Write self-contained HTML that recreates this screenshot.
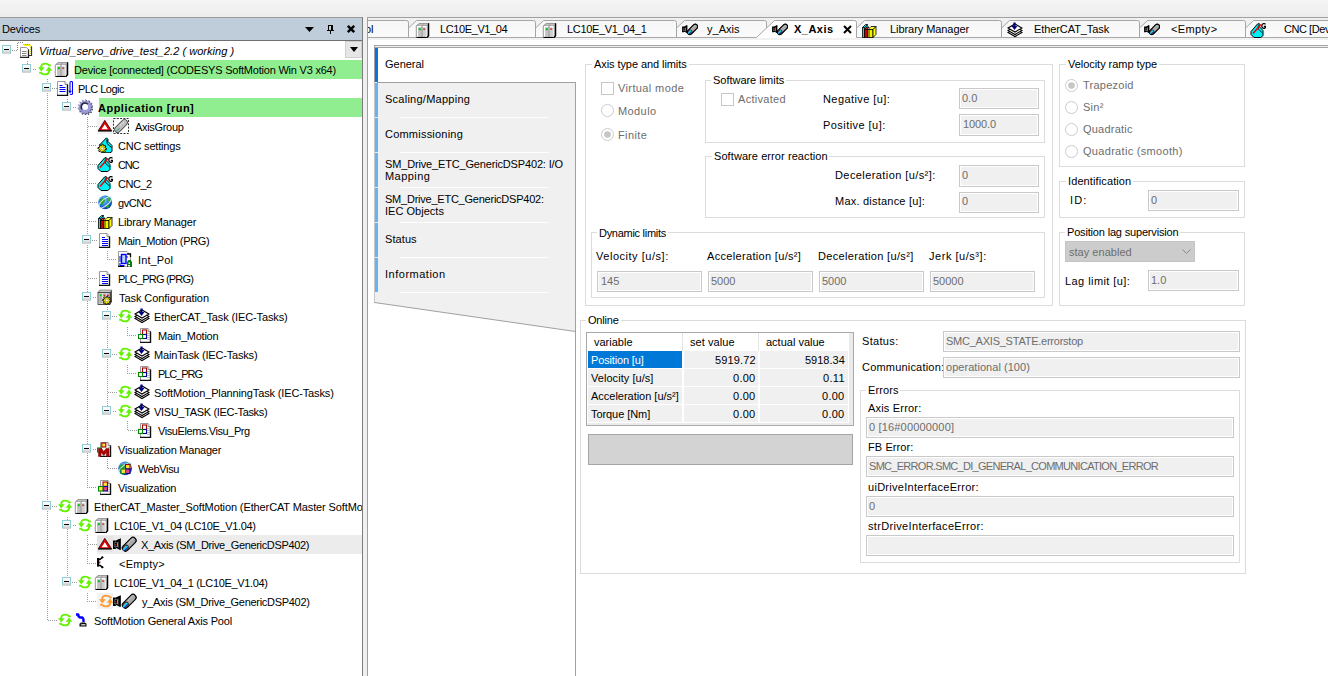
<!DOCTYPE html>
<html><head><meta charset="utf-8"><style>
html,body{margin:0;padding:0;width:1328px;height:676px;overflow:hidden;background:#fff;position:relative}
body div,body svg{position:absolute}
.t{font-family:"Liberation Sans", sans-serif;font-size:11px;line-height:20px;height:20px;white-space:pre}
</style></head><body>
<div style="left:0px;top:0px;width:1328px;height:17px;background:linear-gradient(#f5f5f5,#ececec)"></div>
<div style="left:0px;top:17px;width:363px;height:1px;background:#9a9a9a"></div>
<div style="left:0px;top:18px;width:362px;height:22px;background:#bfcddb"></div>
<div style="left:0px;top:40px;width:363px;height:1px;background:#6f6f6f"></div>
<div style="left:362px;top:17px;width:1px;height:659px;background:#7c7c7c"></div>
<div style="left:0px;top:41px;width:362px;height:635px;background:#fff"></div>
<div class="t" style="left:2px;top:19px;color:#000;letter-spacing:-0.154px;">Devices</div>
<svg style="left:305px;top:27px;" width="10" height="6" viewBox="0 0 10 6"><path d="M0 0H9L4.5 5Z" fill="#000"/></svg>
<svg style="left:326px;top:24px;" width="10" height="11" viewBox="0 0 10 11"><path d="M2 1H7V6H2ZM3 2V6H5V2Z" fill="#000" fill-rule="evenodd"/><path d="M1 6H8V7H1ZM4 7H5V10H4Z" fill="#000"/></svg>
<svg style="left:346px;top:24px;" width="11" height="11" viewBox="0 0 11 11"><path d="M1.8 1.8L8.2 8.2M8.2 1.8L1.8 8.2" stroke="#000" stroke-width="2.5"/></svg>
<div style="left:363px;top:17px;width:4px;height:659px;background:#f0f0f0"></div>
<div style="left:0px;top:41px;width:362px;height:635px;overflow:hidden;">
<div style="left:75px;top:19px;width:287px;height:19px;background:#90ee90"></div>
<div style="left:99px;top:57px;width:263px;height:19px;background:#90ee90"></div>
<div style="left:97px;top:77px;width:16px;height:16px;background:#f3f3f3"></div>
<div style="left:97px;top:494px;width:265px;height:19px;background:#ececec"></div>
<div style="left:97px;top:495px;width:16px;height:16px;background:#e4e4e4"></div>
<div style="left:97px;top:552px;width:16px;height:16px;background:#f3f3f3"></div>
<div style="left:12px;top:9px;width:5px;height:1px;background:repeating-linear-gradient(90deg,#9a9a9a 0 1px,transparent 1px 2px)"></div>
<svg style="left:2px;top:4px;" width="9" height="9" viewBox="0 0 9 9"><defs><linearGradient id="eg" x1="0" y1="0" x2="0" y2="1"><stop offset="0" stop-color="#fff"/><stop offset=".45" stop-color="#f4f4f4"/><stop offset="1" stop-color="#c8c8c8"/></linearGradient></defs><rect x=".5" y=".5" width="8" height="8" fill="url(#eg)" stroke="#92ccd4" stroke-width="1"/><path d="M0 8.5H9" stroke="#d0d6d8"/><path d="M2 4.5H7" stroke="#000" stroke-width="1"/></svg>
<svg style="left:17px;top:1px;" width="16" height="16" viewBox="0 0 16 16"><path d="M0.5 8V0.5H7" stroke="#888" stroke-dasharray="1,1" fill="none"/><path d="M6.5 2.5H12.5L14.5 4.5V13.5H11" fill="#fff" stroke="#888" stroke-width="1"/><path d="M7 3H12.5L14 4.5V13" stroke="#f2f200" stroke-width="2" stroke-dasharray="1,1" fill="none"/><path d="M14.5 4.5V13.5H11" stroke="#333" stroke-width="1.2" fill="none"/><path d="M3.5 5.5H9.5L11.5 7.5V15.5H3.5Z" fill="#fff" stroke="#999" stroke-width="1"/><path d="M11.5 7.5V15.5H3" stroke="#222" stroke-width="1.3" fill="none"/><path d="M5 9.5H9.5M5 11.5H9.5M5 13.5H9.5" stroke="#777" stroke-width=".9"/></svg>
<div class="t" style="left:39px;top:0px;color:#000;font-style:italic;letter-spacing:0.040px;">Virtual_servo_drive_test_2.2 ( working )</div>
<div style="left:27px;top:19px;width:1px;height:10px;background:repeating-linear-gradient(transparent 0 1px,#9a9a9a 1px 2px)"></div>
<div style="left:32px;top:28px;width:5px;height:1px;background:repeating-linear-gradient(90deg,transparent 0 1px,#9a9a9a 1px 2px)"></div>
<svg style="left:22px;top:23px;" width="9" height="9" viewBox="0 0 9 9"><defs><linearGradient id="eg" x1="0" y1="0" x2="0" y2="1"><stop offset="0" stop-color="#fff"/><stop offset=".45" stop-color="#f4f4f4"/><stop offset="1" stop-color="#c8c8c8"/></linearGradient></defs><rect x=".5" y=".5" width="8" height="8" fill="url(#eg)" stroke="#92ccd4" stroke-width="1"/><path d="M0 8.5H9" stroke="#d0d6d8"/><path d="M2 4.5H7" stroke="#000" stroke-width="1"/></svg>
<svg style="left:37px;top:20px;" width="16" height="16" viewBox="0 0 16 16"><g fill="none" stroke="#62f200" stroke-width="1.9"><path d="M4.2 7V5.8Q4.5 2.6 8.2 2.6Q10.8 2.6 12.2 4.4H13.8"/><path d="M2.2 11.8H4Q5.6 13.4 8.2 13.4Q11.8 13.4 12.2 9.8V9"/></g><path d="M1 6.3H7.6L4.3 10.6Z" fill="#62f200"/><path d="M8.7 9.7H15.3L12 5.4Z" fill="#62f200"/></svg>
<svg style="left:54px;top:20px;" width="16" height="16" viewBox="0 0 16 16"><path d="M1.5 4L4 1.5H13.5L11.5 4Z" fill="#c4c4c4" stroke="#8a8a8a" stroke-width=".8"/><path d="M11.5 4L13.5 1.5V13.5L11.5 15.5Z" fill="#a0a0a0"/><path d="M13.6 1.2V13.8L11.8 15.8" stroke="#000" stroke-width="1.3" fill="none"/><rect x="1.5" y="4" width="10" height="11.5" fill="#fff"/><path d="M1.3 4V15.5" stroke="#8a8a8a" stroke-width=".9"/><rect x="3" y="5.2" width="3.6" height="10.3" fill="#c4c4c4"/><rect x="7.4" y="5.2" width="3.4" height="10.3" fill="#cdcdcd"/><path d="M7 4V15.5" stroke="#777" stroke-width=".9"/><path d="M4 1.6L2 4M8.6 1.6L6.8 4" stroke="#888" stroke-width=".6"/><rect x="3.8" y="6.2" width="2" height="2" fill="#00c000"/><rect x="8.2" y="6.6" width="2" height="1" fill="#a00000"/><path d="M1.5 15.6H11.8" stroke="#000" stroke-width="1.3"/></svg>
<div class="t" style="left:74px;top:19px;color:#000;letter-spacing:-0.214px;">Device [connected] (CODESYS SoftMotion Win V3 x64)</div>
<div style="left:47px;top:38px;width:1px;height:10px;background:repeating-linear-gradient(#9a9a9a 0 1px,transparent 1px 2px)"></div>
<div style="left:47px;top:47px;width:1px;height:10px;background:repeating-linear-gradient(transparent 0 1px,#9a9a9a 1px 2px)"></div>
<div style="left:52px;top:47px;width:5px;height:1px;background:repeating-linear-gradient(90deg,#9a9a9a 0 1px,transparent 1px 2px)"></div>
<svg style="left:42px;top:42px;" width="9" height="9" viewBox="0 0 9 9"><defs><linearGradient id="eg" x1="0" y1="0" x2="0" y2="1"><stop offset="0" stop-color="#fff"/><stop offset=".45" stop-color="#f4f4f4"/><stop offset="1" stop-color="#c8c8c8"/></linearGradient></defs><rect x=".5" y=".5" width="8" height="8" fill="url(#eg)" stroke="#92ccd4" stroke-width="1"/><path d="M0 8.5H9" stroke="#d0d6d8"/><path d="M2 4.5H7" stroke="#000" stroke-width="1"/></svg>
<svg style="left:57px;top:39px;" width="16" height="16" viewBox="0 0 16 16"><path d="M0.5 1.5H8 L10.5 4.5V15.5H0.5Z" fill="#fff" stroke="#9a9a9a" stroke-width="1"/><path d="M8 1.5V4.5H10.5" fill="#eee" stroke="#777" stroke-width=".8"/><path d="M10.5 4.5V15.5H0" stroke="#111" stroke-width="1.4" fill="none"/><path d="M2.5 5.5H5.5M2.5 7.5H8.5M2.5 9.5H8.5M2.5 11.5H8.5" stroke="#0000f0" stroke-width="1"/><path d="M13 11.5V2.5Q13 1.5 14 1.5H14.5Q15.5 1.5 15.5 2.5V13.5Q15.5 14.5 14.5 14.5H14Q13.3 14.5 13.3 13.8" stroke="#0000ff" stroke-width="1.1" fill="none"/><path d="M11.2 10.8H14.8L13 13.6Z" fill="#0000ff"/></svg>
<div class="t" style="left:78px;top:38px;color:#000;letter-spacing:-0.546px;">PLC Logic</div>
<div style="left:67px;top:57px;width:1px;height:10px;background:repeating-linear-gradient(transparent 0 1px,#9a9a9a 1px 2px)"></div>
<div style="left:47px;top:57px;width:1px;height:19px;background:repeating-linear-gradient(transparent 0 1px,#9a9a9a 1px 2px)"></div>
<div style="left:72px;top:66px;width:5px;height:1px;background:repeating-linear-gradient(90deg,transparent 0 1px,#9a9a9a 1px 2px)"></div>
<svg style="left:62px;top:61px;" width="9" height="9" viewBox="0 0 9 9"><defs><linearGradient id="eg" x1="0" y1="0" x2="0" y2="1"><stop offset="0" stop-color="#fff"/><stop offset=".45" stop-color="#f4f4f4"/><stop offset="1" stop-color="#c8c8c8"/></linearGradient></defs><rect x=".5" y=".5" width="8" height="8" fill="url(#eg)" stroke="#92ccd4" stroke-width="1"/><path d="M0 8.5H9" stroke="#d0d6d8"/><path d="M2 4.5H7" stroke="#000" stroke-width="1"/></svg>
<svg style="left:77px;top:58px;" width="16" height="16" viewBox="0 0 16 16"><polygon points="8.20,0.30 9.06,0.35 9.54,2.15 10.18,2.34 11.54,1.06 12.30,1.48 11.94,3.31 12.44,3.76 14.22,3.20 14.72,3.90 13.61,5.40 13.86,6.02 15.71,6.29 15.85,7.14 14.20,8.00 14.16,8.67 15.71,9.71 15.47,10.54 13.61,10.60 13.28,11.19 14.22,12.80 13.64,13.44 11.94,12.69 11.39,13.08 11.54,14.94 10.74,15.27 9.54,13.85 8.87,13.96 8.20,15.70 7.34,15.65 6.86,13.85 6.22,13.66 4.86,14.94 4.10,14.52 4.46,12.69 3.96,12.24 2.18,12.80 1.68,12.10 2.79,10.60 2.54,9.98 0.69,9.71 0.55,8.86 2.20,8.00 2.24,7.33 0.69,6.29 0.93,5.46 2.79,5.40 3.12,4.81 2.18,3.20 2.76,2.56 4.46,3.31 5.01,2.92 4.86,1.06 5.66,0.73 6.86,2.15 7.53,2.04" fill="#3a3a4a" transform="translate(.7,.7)"/><polygon points="8.20,0.30 9.06,0.35 9.54,2.15 10.18,2.34 11.54,1.06 12.30,1.48 11.94,3.31 12.44,3.76 14.22,3.20 14.72,3.90 13.61,5.40 13.86,6.02 15.71,6.29 15.85,7.14 14.20,8.00 14.16,8.67 15.71,9.71 15.47,10.54 13.61,10.60 13.28,11.19 14.22,12.80 13.64,13.44 11.94,12.69 11.39,13.08 11.54,14.94 10.74,15.27 9.54,13.85 8.87,13.96 8.20,15.70 7.34,15.65 6.86,13.85 6.22,13.66 4.86,14.94 4.10,14.52 4.46,12.69 3.96,12.24 2.18,12.80 1.68,12.10 2.79,10.60 2.54,9.98 0.69,9.71 0.55,8.86 2.20,8.00 2.24,7.33 0.69,6.29 0.93,5.46 2.79,5.40 3.12,4.81 2.18,3.20 2.76,2.56 4.46,3.31 5.01,2.92 4.86,1.06 5.66,0.73 6.86,2.15 7.53,2.04" fill="#9a9ad8"/><path d="M5.2 10.5A3.4 3.4 0 1 1 10.8 5.2" stroke="#2a2a30" stroke-width="1.6" fill="none"/><circle cx="8.2" cy="8" r="2.9" fill="#fff"/></svg>
<div class="t" style="left:98px;top:57px;color:#000;font-weight:bold;letter-spacing:0.487px;">Application [run]</div>
<div style="left:87px;top:76px;width:1px;height:10px;background:repeating-linear-gradient(#9a9a9a 0 1px,transparent 1px 2px)"></div>
<div style="left:87px;top:85px;width:1px;height:10px;background:repeating-linear-gradient(transparent 0 1px,#9a9a9a 1px 2px)"></div>
<div style="left:47px;top:76px;width:1px;height:19px;background:repeating-linear-gradient(#9a9a9a 0 1px,transparent 1px 2px)"></div>
<div style="left:88px;top:85px;width:9px;height:1px;background:repeating-linear-gradient(90deg,#9a9a9a 0 1px,transparent 1px 2px)"></div>
<svg style="left:98px;top:77px;" width="16" height="16" viewBox="0 0 16 16"><path d="M6.8 2.3L13.6 12.8H0.2Z" fill="#e00000" stroke="#000" stroke-width=".7" stroke-linejoin="round"/><path d="M6.8 6.3L10 11.2H3.6Z" fill="#fff"/><path d="M0 12.9H13.8" stroke="#000" stroke-width="1.1"/></svg>
<svg style="left:113px;top:77px;" width="16" height="16" viewBox="0 0 16 16"><rect x="0.5" y="0.5" width="15" height="15" fill="none" stroke="#333" stroke-width="1" stroke-dasharray="2,1.3"/><path d="M4.5 11.5L11.5 4.5" stroke="#555" stroke-width="6.8" stroke-linecap="round"/><path d="M4.5 11.5L11.5 4.5" stroke="#c0c0c0" stroke-width="5" stroke-linecap="round"/><path d="M7 7L11.5 3" stroke="#e8e8e8" stroke-width="1.2" stroke-dasharray="1,1"/><path d="M2.8 13.2L6.3 9.7" stroke="#70d070" stroke-width="1.3"/><path d="M3.4 13.8L6.8 10.4" stroke="#5050ff" stroke-width=".8"/></svg>
<div class="t" style="left:135px;top:76px;color:#000;letter-spacing:-0.320px;">AxisGroup</div>
<div style="left:87px;top:95px;width:1px;height:10px;background:repeating-linear-gradient(transparent 0 1px,#9a9a9a 1px 2px)"></div>
<div style="left:87px;top:104px;width:1px;height:10px;background:repeating-linear-gradient(#9a9a9a 0 1px,transparent 1px 2px)"></div>
<div style="left:47px;top:95px;width:1px;height:19px;background:repeating-linear-gradient(transparent 0 1px,#9a9a9a 1px 2px)"></div>
<div style="left:88px;top:104px;width:9px;height:1px;background:repeating-linear-gradient(90deg,transparent 0 1px,#9a9a9a 1px 2px)"></div>
<svg style="left:97px;top:96px;" width="16" height="16" viewBox="0 0 16 16"><path d="M2.5 8L9.5 0.8L11 2.5V4.5L15 8.5V14.5L13 15.8H6Z" fill="#00f0f8" stroke="#000" stroke-width="1"/><path d="M10 2.2V6.5L14.5 10.5" stroke="#000" stroke-width="1" fill="none"/><polygon points="9.60,11.50 9.52,12.36 7.97,12.65 7.69,13.17 8.31,14.61 7.64,15.16 6.35,14.27 5.79,14.44 5.20,15.90 4.34,15.82 4.05,14.27 3.53,13.99 2.09,14.61 1.54,13.94 2.43,12.65 2.26,12.09 0.80,11.50 0.88,10.64 2.43,10.35 2.71,9.83 2.09,8.39 2.76,7.84 4.05,8.73 4.61,8.56 5.20,7.10 6.06,7.18 6.35,8.73 6.87,9.01 8.31,8.39 8.86,9.06 7.97,10.35 8.14,10.91" fill="#ffee00" stroke="#000" stroke-width=".9"/><circle cx="5.2" cy="11.5" r="1.4" fill="#fff" stroke="#555" stroke-width=".5"/></svg>
<div class="t" style="left:118px;top:95px;color:#000;letter-spacing:-0.191px;">CNC settings</div>
<div style="left:87px;top:114px;width:1px;height:10px;background:repeating-linear-gradient(#9a9a9a 0 1px,transparent 1px 2px)"></div>
<div style="left:87px;top:123px;width:1px;height:10px;background:repeating-linear-gradient(transparent 0 1px,#9a9a9a 1px 2px)"></div>
<div style="left:47px;top:114px;width:1px;height:19px;background:repeating-linear-gradient(#9a9a9a 0 1px,transparent 1px 2px)"></div>
<div style="left:88px;top:123px;width:9px;height:1px;background:repeating-linear-gradient(90deg,#9a9a9a 0 1px,transparent 1px 2px)"></div>
<svg style="left:97px;top:115px;" width="16" height="16" viewBox="0 0 16 16"><path d="M1 9.5L7.5 2L9.2 1.5V4.5L13 8.5V13.5L10.8 15.5H4L1 12.5Z" fill="#00f0f8" stroke="#000" stroke-width="1"/><path d="M8.2 3.5V7L12.5 11" stroke="#000" stroke-width=".9" fill="none"/><path d="M13.6 9.5V14" stroke="#0aa" stroke-width=".8"/><path d="M3 11.5L11 2.5" stroke="#ee0000" stroke-width="1.5"/><path d="M15.4 2.4C15 1.2 11.8 1 11.8 4C11.8 7 15.2 7 15.4 5.2V4.5H13.8" stroke="#000" stroke-width="1.3" fill="#fff"/></svg>
<div class="t" style="left:118px;top:114px;color:#000;letter-spacing:-1.072px;">CNC</div>
<div style="left:87px;top:133px;width:1px;height:10px;background:repeating-linear-gradient(transparent 0 1px,#9a9a9a 1px 2px)"></div>
<div style="left:87px;top:142px;width:1px;height:10px;background:repeating-linear-gradient(#9a9a9a 0 1px,transparent 1px 2px)"></div>
<div style="left:47px;top:133px;width:1px;height:19px;background:repeating-linear-gradient(transparent 0 1px,#9a9a9a 1px 2px)"></div>
<div style="left:88px;top:142px;width:9px;height:1px;background:repeating-linear-gradient(90deg,transparent 0 1px,#9a9a9a 1px 2px)"></div>
<svg style="left:97px;top:134px;" width="16" height="16" viewBox="0 0 16 16"><path d="M1 9.5L7.5 2L9.2 1.5V4.5L13 8.5V13.5L10.8 15.5H4L1 12.5Z" fill="#00f0f8" stroke="#000" stroke-width="1"/><path d="M8.2 3.5V7L12.5 11" stroke="#000" stroke-width=".9" fill="none"/><path d="M13.6 9.5V14" stroke="#0aa" stroke-width=".8"/><path d="M3 11.5L11 2.5" stroke="#ee0000" stroke-width="1.5"/><path d="M15.4 2.4C15 1.2 11.8 1 11.8 4C11.8 7 15.2 7 15.4 5.2V4.5H13.8" stroke="#000" stroke-width="1.3" fill="#fff"/></svg>
<div class="t" style="left:118px;top:133px;color:#000;letter-spacing:-0.470px;">CNC_2</div>
<div style="left:87px;top:152px;width:1px;height:10px;background:repeating-linear-gradient(#9a9a9a 0 1px,transparent 1px 2px)"></div>
<div style="left:87px;top:161px;width:1px;height:10px;background:repeating-linear-gradient(transparent 0 1px,#9a9a9a 1px 2px)"></div>
<div style="left:47px;top:152px;width:1px;height:19px;background:repeating-linear-gradient(#9a9a9a 0 1px,transparent 1px 2px)"></div>
<div style="left:88px;top:161px;width:9px;height:1px;background:repeating-linear-gradient(90deg,#9a9a9a 0 1px,transparent 1px 2px)"></div>
<svg style="left:97px;top:153px;" width="16" height="16" viewBox="0 0 16 16"><defs><radialGradient id="gl" cx=".4" cy=".35" r=".75"><stop offset="0" stop-color="#8fd0ff"/><stop offset=".55" stop-color="#1e70e0"/><stop offset="1" stop-color="#0830a0"/></radialGradient></defs><circle cx="8.2" cy="8.3" r="6.9" fill="url(#gl)"/><path d="M3 5.5C5 3.5 8 4 8 6.5C8 8.5 6 8.5 5.5 10.5C4.5 12 3 10 2.5 8.5Z" fill="#2aa02a"/><path d="M9.5 2.2C12.5 2.8 14.5 5.5 14.5 8C13 9 11 7.5 10.5 5.5C10 4 9 3 9.5 2.2Z" fill="#3ab03a"/><path d="M8.5 11C10.5 10 12.5 10.5 12 13C10.5 14.5 8.5 13 8.5 11Z" fill="#2aa02a"/><ellipse cx="8.2" cy="8.3" rx="8" ry="3.2" transform="rotate(-40 8.2 8.3)" fill="none" stroke="#d8f0ff" stroke-width="1.1" opacity=".9"/></svg>
<div class="t" style="left:118px;top:152px;color:#000;letter-spacing:-0.413px;">gvCNC</div>
<div style="left:87px;top:171px;width:1px;height:10px;background:repeating-linear-gradient(transparent 0 1px,#9a9a9a 1px 2px)"></div>
<div style="left:87px;top:180px;width:1px;height:10px;background:repeating-linear-gradient(#9a9a9a 0 1px,transparent 1px 2px)"></div>
<div style="left:47px;top:171px;width:1px;height:19px;background:repeating-linear-gradient(transparent 0 1px,#9a9a9a 1px 2px)"></div>
<div style="left:88px;top:180px;width:9px;height:1px;background:repeating-linear-gradient(90deg,transparent 0 1px,#9a9a9a 1px 2px)"></div>
<svg style="left:97px;top:172px;" width="16" height="16" viewBox="0 0 16 16"><path d="M1.5 5.5L4.5 2.5H6.5L3.5 5.5Z" fill="#00e8f0" stroke="#000" stroke-width=".8"/><path d="M1.5 5.5H3.5V15.5H1.5Z" fill="#00e8f0" stroke="#000" stroke-width=".8"/><path d="M3.5 5.5L6.5 2.5V4L4 6.5Z" fill="#00c8d0" stroke="#000" stroke-width=".6"/><path d="M3.5 7.5L6 5H8L5.5 7.5Z" fill="#ff2020" stroke="#000" stroke-width=".8"/><rect x="3.5" y="7.5" width="3.5" height="8" fill="#ee0000" stroke="#000" stroke-width=".8"/><path d="M5 8V15" stroke="#900" stroke-width=".8"/><path d="M7 7.5L10 4.5H15L12 7.5Z" fill="#ffff40" stroke="#000" stroke-width=".8"/><rect x="7" y="7.5" width="5" height="8" fill="#f0f000" stroke="#000" stroke-width=".8"/><path d="M8.5 8V15" stroke="#909000" stroke-width="1"/><path d="M12 7.5L15 4.5V12.5L12 15.5Z" fill="#ffff00" stroke="#000" stroke-width=".8"/></svg>
<div class="t" style="left:118px;top:171px;color:#000;letter-spacing:-0.121px;">Library Manager</div>
<div style="left:87px;top:190px;width:1px;height:10px;background:repeating-linear-gradient(#9a9a9a 0 1px,transparent 1px 2px)"></div>
<div style="left:87px;top:199px;width:1px;height:10px;background:repeating-linear-gradient(transparent 0 1px,#9a9a9a 1px 2px)"></div>
<div style="left:47px;top:190px;width:1px;height:19px;background:repeating-linear-gradient(#9a9a9a 0 1px,transparent 1px 2px)"></div>
<div style="left:92px;top:199px;width:5px;height:1px;background:repeating-linear-gradient(90deg,#9a9a9a 0 1px,transparent 1px 2px)"></div>
<svg style="left:82px;top:194px;" width="9" height="9" viewBox="0 0 9 9"><defs><linearGradient id="eg" x1="0" y1="0" x2="0" y2="1"><stop offset="0" stop-color="#fff"/><stop offset=".45" stop-color="#f4f4f4"/><stop offset="1" stop-color="#c8c8c8"/></linearGradient></defs><rect x=".5" y=".5" width="8" height="8" fill="url(#eg)" stroke="#92ccd4" stroke-width="1"/><path d="M0 8.5H9" stroke="#d0d6d8"/><path d="M2 4.5H7" stroke="#000" stroke-width="1"/></svg>
<svg style="left:97px;top:191px;" width="16" height="16" viewBox="0 0 16 16"><path d="M2.5 1.5H10 L12.5 4.5V15.5H2.5Z" fill="#fff" stroke="#9a9a9a" stroke-width="1"/><path d="M10 1.5V4.5H12.5" fill="#eee" stroke="#777" stroke-width=".8"/><path d="M12.5 4.5V15.5H2" stroke="#111" stroke-width="1.4" fill="none"/><path d="M5 5.5H8M5 7.5H11M5 9.5H11M5 11.5H11M5 13.5H11" stroke="#0000f0" stroke-width="1"/></svg>
<div class="t" style="left:118px;top:190px;color:#000;letter-spacing:-0.350px;">Main_Motion (PRG)</div>
<div style="left:107px;top:209px;width:1px;height:10px;background:repeating-linear-gradient(transparent 0 1px,#9a9a9a 1px 2px)"></div>
<div style="left:87px;top:209px;width:1px;height:19px;background:repeating-linear-gradient(transparent 0 1px,#9a9a9a 1px 2px)"></div>
<div style="left:47px;top:209px;width:1px;height:19px;background:repeating-linear-gradient(transparent 0 1px,#9a9a9a 1px 2px)"></div>
<div style="left:108px;top:218px;width:9px;height:1px;background:repeating-linear-gradient(90deg,transparent 0 1px,#9a9a9a 1px 2px)"></div>
<svg style="left:117px;top:210px;" width="16" height="16" viewBox="0 0 16 16"><path d="M1.5 0.5H10L13.5 4V15.5H1.5Z" fill="#fff" stroke="#999" stroke-width="1"/><path d="M1 15.5H7M10 3H13.5V6" stroke="#000" stroke-width="1.3" fill="none"/><rect x="4.5" y="3.5" width="4.5" height="9" fill="#b8d8f0" stroke="#0000ff" stroke-width="1.4"/><path d="M2 6H4.5M2 8H4.5M2 10H4.5M3 12V14.5H7.5M9 6H11" stroke="#0000ff" stroke-width="1.1" fill="none"/><path d="M9 16H11V14H13V16H15V11L13.5 9H11.5L10 11V16ZM11.5 11.5H13V13H11.5Z" fill="#008000" fill-rule="evenodd"/></svg>
<div class="t" style="left:138px;top:209px;color:#000;letter-spacing:0.108px;">Int_Pol</div>
<div style="left:87px;top:228px;width:1px;height:10px;background:repeating-linear-gradient(#9a9a9a 0 1px,transparent 1px 2px)"></div>
<div style="left:87px;top:237px;width:1px;height:10px;background:repeating-linear-gradient(transparent 0 1px,#9a9a9a 1px 2px)"></div>
<div style="left:47px;top:228px;width:1px;height:19px;background:repeating-linear-gradient(#9a9a9a 0 1px,transparent 1px 2px)"></div>
<div style="left:88px;top:237px;width:9px;height:1px;background:repeating-linear-gradient(90deg,#9a9a9a 0 1px,transparent 1px 2px)"></div>
<svg style="left:97px;top:229px;" width="16" height="16" viewBox="0 0 16 16"><path d="M2.5 1.5H10 L12.5 4.5V15.5H2.5Z" fill="#fff" stroke="#9a9a9a" stroke-width="1"/><path d="M10 1.5V4.5H12.5" fill="#eee" stroke="#777" stroke-width=".8"/><path d="M12.5 4.5V15.5H2" stroke="#111" stroke-width="1.4" fill="none"/><path d="M5 5.5H8M5 7.5H11M5 9.5H11M5 11.5H11M5 13.5H11" stroke="#0000f0" stroke-width="1"/></svg>
<div class="t" style="left:118px;top:228px;color:#000;letter-spacing:-0.815px;">PLC_PRG (PRG)</div>
<div style="left:87px;top:247px;width:1px;height:10px;background:repeating-linear-gradient(transparent 0 1px,#9a9a9a 1px 2px)"></div>
<div style="left:87px;top:256px;width:1px;height:10px;background:repeating-linear-gradient(#9a9a9a 0 1px,transparent 1px 2px)"></div>
<div style="left:47px;top:247px;width:1px;height:19px;background:repeating-linear-gradient(transparent 0 1px,#9a9a9a 1px 2px)"></div>
<div style="left:92px;top:256px;width:5px;height:1px;background:repeating-linear-gradient(90deg,transparent 0 1px,#9a9a9a 1px 2px)"></div>
<svg style="left:82px;top:251px;" width="9" height="9" viewBox="0 0 9 9"><defs><linearGradient id="eg" x1="0" y1="0" x2="0" y2="1"><stop offset="0" stop-color="#fff"/><stop offset=".45" stop-color="#f4f4f4"/><stop offset="1" stop-color="#c8c8c8"/></linearGradient></defs><rect x=".5" y=".5" width="8" height="8" fill="url(#eg)" stroke="#92ccd4" stroke-width="1"/><path d="M0 8.5H9" stroke="#d0d6d8"/><path d="M2 4.5H7" stroke="#000" stroke-width="1"/></svg>
<svg style="left:97px;top:248px;" width="16" height="16" viewBox="0 0 16 16"><path d="M1 3.5L3 1H15V13L13 15.5H1Z" fill="#555"/><path d="M1 3.5L3 1H15L13 3.5Z" fill="#c8c8c8" stroke="#666" stroke-width=".6"/><rect x="1" y="3.5" width="12" height="12" fill="#e0e0e0" stroke="#333" stroke-width=".8"/><rect x="2.2" y="4.5" width="3" height="10" fill="#b0b0b0"/><rect x="6" y="4.5" width="3" height="10" fill="#b8b8b8"/><rect x="9.6" y="4.5" width="2.8" height="10" fill="#b0b0b0"/><rect x="2.8" y="5.5" width="1.6" height="1.5" fill="#00d000"/><rect x="6.6" y="5.8" width="1.6" height="1" fill="#c00"/><rect x="10.2" y="5.8" width="1.6" height="1" fill="#c00"/><polygon points="14.10,11.50 14.02,12.34 12.48,12.61 12.21,13.11 12.84,14.54 12.19,15.08 10.91,14.18 10.37,14.34 9.80,15.80 8.96,15.72 8.69,14.18 8.19,13.91 6.76,14.54 6.22,13.89 7.12,12.61 6.96,12.07 5.50,11.50 5.58,10.66 7.12,10.39 7.39,9.89 6.76,8.46 7.41,7.92 8.69,8.82 9.23,8.66 9.80,7.20 10.64,7.28 10.91,8.82 11.41,9.09 12.84,8.46 13.38,9.11 12.48,10.39 12.64,10.93" fill="#ffee00" stroke="#000" stroke-width=".9"/><circle cx="9.8" cy="11.5" r="1.4" fill="#fff" stroke="#555" stroke-width=".5"/></svg>
<div class="t" style="left:119px;top:247px;color:#000;letter-spacing:-0.065px;">Task Configuration</div>
<div style="left:107px;top:266px;width:1px;height:10px;background:repeating-linear-gradient(#9a9a9a 0 1px,transparent 1px 2px)"></div>
<div style="left:107px;top:275px;width:1px;height:10px;background:repeating-linear-gradient(transparent 0 1px,#9a9a9a 1px 2px)"></div>
<div style="left:87px;top:266px;width:1px;height:19px;background:repeating-linear-gradient(#9a9a9a 0 1px,transparent 1px 2px)"></div>
<div style="left:47px;top:266px;width:1px;height:19px;background:repeating-linear-gradient(#9a9a9a 0 1px,transparent 1px 2px)"></div>
<div style="left:112px;top:275px;width:5px;height:1px;background:repeating-linear-gradient(90deg,#9a9a9a 0 1px,transparent 1px 2px)"></div>
<svg style="left:102px;top:270px;" width="9" height="9" viewBox="0 0 9 9"><defs><linearGradient id="eg" x1="0" y1="0" x2="0" y2="1"><stop offset="0" stop-color="#fff"/><stop offset=".45" stop-color="#f4f4f4"/><stop offset="1" stop-color="#c8c8c8"/></linearGradient></defs><rect x=".5" y=".5" width="8" height="8" fill="url(#eg)" stroke="#92ccd4" stroke-width="1"/><path d="M0 8.5H9" stroke="#d0d6d8"/><path d="M2 4.5H7" stroke="#000" stroke-width="1"/></svg>
<svg style="left:117px;top:267px;" width="16" height="16" viewBox="0 0 16 16"><g fill="none" stroke="#62f200" stroke-width="1.9"><path d="M4.2 7V5.8Q4.5 2.6 8.2 2.6Q10.8 2.6 12.2 4.4H13.8"/><path d="M2.2 11.8H4Q5.6 13.4 8.2 13.4Q11.8 13.4 12.2 9.8V9"/></g><path d="M1 6.3H7.6L4.3 10.6Z" fill="#62f200"/><path d="M8.7 9.7H15.3L12 5.4Z" fill="#62f200"/></svg>
<svg style="left:134px;top:267px;" width="16" height="16" viewBox="0 0 16 16"><g fill="#fff" stroke="#000" stroke-width="1.1"><path d="M1 10.5L8 6.5L15 10.5L8 14.5Z"/><path d="M1 8.5L8 4.5L15 8.5L8 12.5Z"/><path d="M1 6L8 2L15 6L8 10Z"/></g><path d="M7.5 0.5V5" stroke="#000080" stroke-width="2.2"/><path d="M4.5 4L7.5 8L10.5 4Z" fill="#000080"/></svg>
<div class="t" style="left:154px;top:266px;color:#000;letter-spacing:-0.122px;">EtherCAT_Task (IEC-Tasks)</div>
<div style="left:127px;top:285px;width:1px;height:10px;background:repeating-linear-gradient(transparent 0 1px,#9a9a9a 1px 2px)"></div>
<div style="left:107px;top:285px;width:1px;height:19px;background:repeating-linear-gradient(transparent 0 1px,#9a9a9a 1px 2px)"></div>
<div style="left:87px;top:285px;width:1px;height:19px;background:repeating-linear-gradient(transparent 0 1px,#9a9a9a 1px 2px)"></div>
<div style="left:47px;top:285px;width:1px;height:19px;background:repeating-linear-gradient(transparent 0 1px,#9a9a9a 1px 2px)"></div>
<div style="left:128px;top:294px;width:9px;height:1px;background:repeating-linear-gradient(90deg,transparent 0 1px,#9a9a9a 1px 2px)"></div>
<svg style="left:137px;top:286px;" width="16" height="16" viewBox="0 0 16 16"><path d="M3.5 1.5H11 L13.5 4.5V15.5H3.5Z" fill="#fff" stroke="#9a9a9a" stroke-width="1"/><path d="M11 1.5V4.5H13.5" fill="#eee" stroke="#777" stroke-width=".8"/><path d="M13.5 4.5V15.5H3" stroke="#111" stroke-width="1.4" fill="none"/><path d="M10 6.5H13M10 8.5H13M10 10.5H13M10 12.5H13" stroke="#aaa" stroke-width=".8"/><rect x="5.5" y="3" width="4" height="4.5" fill="#fff" stroke="#a00000" stroke-width="1.1"/><rect x="5.5" y="7.5" width="4" height="4" fill="#fff" stroke="#0000a0" stroke-width="1.1"/><rect x="1.5" y="7.5" width="4" height="4" fill="#fff" stroke="#008800" stroke-width="1.1"/></svg>
<div class="t" style="left:158px;top:285px;color:#000;letter-spacing:-0.238px;">Main_Motion</div>
<div style="left:107px;top:304px;width:1px;height:10px;background:repeating-linear-gradient(#9a9a9a 0 1px,transparent 1px 2px)"></div>
<div style="left:107px;top:313px;width:1px;height:10px;background:repeating-linear-gradient(transparent 0 1px,#9a9a9a 1px 2px)"></div>
<div style="left:87px;top:304px;width:1px;height:19px;background:repeating-linear-gradient(#9a9a9a 0 1px,transparent 1px 2px)"></div>
<div style="left:47px;top:304px;width:1px;height:19px;background:repeating-linear-gradient(#9a9a9a 0 1px,transparent 1px 2px)"></div>
<div style="left:112px;top:313px;width:5px;height:1px;background:repeating-linear-gradient(90deg,#9a9a9a 0 1px,transparent 1px 2px)"></div>
<svg style="left:102px;top:308px;" width="9" height="9" viewBox="0 0 9 9"><defs><linearGradient id="eg" x1="0" y1="0" x2="0" y2="1"><stop offset="0" stop-color="#fff"/><stop offset=".45" stop-color="#f4f4f4"/><stop offset="1" stop-color="#c8c8c8"/></linearGradient></defs><rect x=".5" y=".5" width="8" height="8" fill="url(#eg)" stroke="#92ccd4" stroke-width="1"/><path d="M0 8.5H9" stroke="#d0d6d8"/><path d="M2 4.5H7" stroke="#000" stroke-width="1"/></svg>
<svg style="left:117px;top:305px;" width="16" height="16" viewBox="0 0 16 16"><g fill="none" stroke="#62f200" stroke-width="1.9"><path d="M4.2 7V5.8Q4.5 2.6 8.2 2.6Q10.8 2.6 12.2 4.4H13.8"/><path d="M2.2 11.8H4Q5.6 13.4 8.2 13.4Q11.8 13.4 12.2 9.8V9"/></g><path d="M1 6.3H7.6L4.3 10.6Z" fill="#62f200"/><path d="M8.7 9.7H15.3L12 5.4Z" fill="#62f200"/></svg>
<svg style="left:134px;top:305px;" width="16" height="16" viewBox="0 0 16 16"><g fill="#fff" stroke="#000" stroke-width="1.1"><path d="M1 10.5L8 6.5L15 10.5L8 14.5Z"/><path d="M1 8.5L8 4.5L15 8.5L8 12.5Z"/><path d="M1 6L8 2L15 6L8 10Z"/></g><path d="M7.5 0.5V5" stroke="#000080" stroke-width="2.2"/><path d="M4.5 4L7.5 8L10.5 4Z" fill="#000080"/></svg>
<div class="t" style="left:154px;top:304px;color:#000;letter-spacing:-0.177px;">MainTask (IEC-Tasks)</div>
<div style="left:127px;top:323px;width:1px;height:10px;background:repeating-linear-gradient(transparent 0 1px,#9a9a9a 1px 2px)"></div>
<div style="left:107px;top:323px;width:1px;height:19px;background:repeating-linear-gradient(transparent 0 1px,#9a9a9a 1px 2px)"></div>
<div style="left:87px;top:323px;width:1px;height:19px;background:repeating-linear-gradient(transparent 0 1px,#9a9a9a 1px 2px)"></div>
<div style="left:47px;top:323px;width:1px;height:19px;background:repeating-linear-gradient(transparent 0 1px,#9a9a9a 1px 2px)"></div>
<div style="left:128px;top:332px;width:9px;height:1px;background:repeating-linear-gradient(90deg,transparent 0 1px,#9a9a9a 1px 2px)"></div>
<svg style="left:137px;top:324px;" width="16" height="16" viewBox="0 0 16 16"><path d="M3.5 1.5H11 L13.5 4.5V15.5H3.5Z" fill="#fff" stroke="#9a9a9a" stroke-width="1"/><path d="M11 1.5V4.5H13.5" fill="#eee" stroke="#777" stroke-width=".8"/><path d="M13.5 4.5V15.5H3" stroke="#111" stroke-width="1.4" fill="none"/><path d="M10 6.5H13M10 8.5H13M10 10.5H13M10 12.5H13" stroke="#aaa" stroke-width=".8"/><rect x="5.5" y="3" width="4" height="4.5" fill="#fff" stroke="#a00000" stroke-width="1.1"/><rect x="5.5" y="7.5" width="4" height="4" fill="#fff" stroke="#0000a0" stroke-width="1.1"/><rect x="1.5" y="7.5" width="4" height="4" fill="#fff" stroke="#008800" stroke-width="1.1"/></svg>
<div class="t" style="left:158px;top:323px;color:#000;letter-spacing:-1.060px;">PLC_PRG</div>
<div style="left:107px;top:342px;width:1px;height:10px;background:repeating-linear-gradient(#9a9a9a 0 1px,transparent 1px 2px)"></div>
<div style="left:107px;top:351px;width:1px;height:10px;background:repeating-linear-gradient(transparent 0 1px,#9a9a9a 1px 2px)"></div>
<div style="left:87px;top:342px;width:1px;height:19px;background:repeating-linear-gradient(#9a9a9a 0 1px,transparent 1px 2px)"></div>
<div style="left:47px;top:342px;width:1px;height:19px;background:repeating-linear-gradient(#9a9a9a 0 1px,transparent 1px 2px)"></div>
<div style="left:108px;top:351px;width:9px;height:1px;background:repeating-linear-gradient(90deg,#9a9a9a 0 1px,transparent 1px 2px)"></div>
<svg style="left:117px;top:343px;" width="16" height="16" viewBox="0 0 16 16"><g fill="none" stroke="#62f200" stroke-width="1.9"><path d="M4.2 7V5.8Q4.5 2.6 8.2 2.6Q10.8 2.6 12.2 4.4H13.8"/><path d="M2.2 11.8H4Q5.6 13.4 8.2 13.4Q11.8 13.4 12.2 9.8V9"/></g><path d="M1 6.3H7.6L4.3 10.6Z" fill="#62f200"/><path d="M8.7 9.7H15.3L12 5.4Z" fill="#62f200"/></svg>
<svg style="left:134px;top:343px;" width="16" height="16" viewBox="0 0 16 16"><g fill="#fff" stroke="#000" stroke-width="1.1"><path d="M1 10.5L8 6.5L15 10.5L8 14.5Z"/><path d="M1 8.5L8 4.5L15 8.5L8 12.5Z"/><path d="M1 6L8 2L15 6L8 10Z"/></g><path d="M7.5 0.5V5" stroke="#000080" stroke-width="2.2"/><path d="M4.5 4L7.5 8L10.5 4Z" fill="#000080"/></svg>
<div class="t" style="left:154px;top:342px;color:#000;letter-spacing:-0.142px;">SoftMotion_PlanningTask (IEC-Tasks)</div>
<div style="left:107px;top:361px;width:1px;height:10px;background:repeating-linear-gradient(transparent 0 1px,#9a9a9a 1px 2px)"></div>
<div style="left:87px;top:361px;width:1px;height:19px;background:repeating-linear-gradient(transparent 0 1px,#9a9a9a 1px 2px)"></div>
<div style="left:47px;top:361px;width:1px;height:19px;background:repeating-linear-gradient(transparent 0 1px,#9a9a9a 1px 2px)"></div>
<div style="left:112px;top:370px;width:5px;height:1px;background:repeating-linear-gradient(90deg,transparent 0 1px,#9a9a9a 1px 2px)"></div>
<svg style="left:102px;top:365px;" width="9" height="9" viewBox="0 0 9 9"><defs><linearGradient id="eg" x1="0" y1="0" x2="0" y2="1"><stop offset="0" stop-color="#fff"/><stop offset=".45" stop-color="#f4f4f4"/><stop offset="1" stop-color="#c8c8c8"/></linearGradient></defs><rect x=".5" y=".5" width="8" height="8" fill="url(#eg)" stroke="#92ccd4" stroke-width="1"/><path d="M0 8.5H9" stroke="#d0d6d8"/><path d="M2 4.5H7" stroke="#000" stroke-width="1"/></svg>
<svg style="left:117px;top:362px;" width="16" height="16" viewBox="0 0 16 16"><g fill="none" stroke="#62f200" stroke-width="1.9"><path d="M4.2 7V5.8Q4.5 2.6 8.2 2.6Q10.8 2.6 12.2 4.4H13.8"/><path d="M2.2 11.8H4Q5.6 13.4 8.2 13.4Q11.8 13.4 12.2 9.8V9"/></g><path d="M1 6.3H7.6L4.3 10.6Z" fill="#62f200"/><path d="M8.7 9.7H15.3L12 5.4Z" fill="#62f200"/></svg>
<svg style="left:134px;top:362px;" width="16" height="16" viewBox="0 0 16 16"><g fill="#fff" stroke="#000" stroke-width="1.1"><path d="M1 10.5L8 6.5L15 10.5L8 14.5Z"/><path d="M1 8.5L8 4.5L15 8.5L8 12.5Z"/><path d="M1 6L8 2L15 6L8 10Z"/></g><path d="M7.5 0.5V5" stroke="#000080" stroke-width="2.2"/><path d="M4.5 4L7.5 8L10.5 4Z" fill="#000080"/></svg>
<div class="t" style="left:154px;top:361px;color:#000;letter-spacing:-0.331px;">VISU_TASK (IEC-Tasks)</div>
<div style="left:127px;top:380px;width:1px;height:10px;background:repeating-linear-gradient(#9a9a9a 0 1px,transparent 1px 2px)"></div>
<div style="left:87px;top:380px;width:1px;height:19px;background:repeating-linear-gradient(#9a9a9a 0 1px,transparent 1px 2px)"></div>
<div style="left:47px;top:380px;width:1px;height:19px;background:repeating-linear-gradient(#9a9a9a 0 1px,transparent 1px 2px)"></div>
<div style="left:128px;top:389px;width:9px;height:1px;background:repeating-linear-gradient(90deg,#9a9a9a 0 1px,transparent 1px 2px)"></div>
<svg style="left:137px;top:381px;" width="16" height="16" viewBox="0 0 16 16"><path d="M3.5 1.5H11 L13.5 4.5V15.5H3.5Z" fill="#fff" stroke="#9a9a9a" stroke-width="1"/><path d="M11 1.5V4.5H13.5" fill="#eee" stroke="#777" stroke-width=".8"/><path d="M13.5 4.5V15.5H3" stroke="#111" stroke-width="1.4" fill="none"/><path d="M10 6.5H13M10 8.5H13M10 10.5H13M10 12.5H13" stroke="#aaa" stroke-width=".8"/><rect x="5.5" y="3" width="4" height="4.5" fill="#fff" stroke="#a00000" stroke-width="1.1"/><rect x="5.5" y="7.5" width="4" height="4" fill="#fff" stroke="#0000a0" stroke-width="1.1"/><rect x="1.5" y="7.5" width="4" height="4" fill="#fff" stroke="#008800" stroke-width="1.1"/></svg>
<div class="t" style="left:158px;top:380px;color:#000;letter-spacing:-0.416px;">VisuElems.Visu_Prg</div>
<div style="left:87px;top:399px;width:1px;height:10px;background:repeating-linear-gradient(transparent 0 1px,#9a9a9a 1px 2px)"></div>
<div style="left:87px;top:408px;width:1px;height:10px;background:repeating-linear-gradient(#9a9a9a 0 1px,transparent 1px 2px)"></div>
<div style="left:47px;top:399px;width:1px;height:19px;background:repeating-linear-gradient(transparent 0 1px,#9a9a9a 1px 2px)"></div>
<div style="left:92px;top:408px;width:5px;height:1px;background:repeating-linear-gradient(90deg,transparent 0 1px,#9a9a9a 1px 2px)"></div>
<svg style="left:82px;top:403px;" width="9" height="9" viewBox="0 0 9 9"><defs><linearGradient id="eg" x1="0" y1="0" x2="0" y2="1"><stop offset="0" stop-color="#fff"/><stop offset=".45" stop-color="#f4f4f4"/><stop offset="1" stop-color="#c8c8c8"/></linearGradient></defs><rect x=".5" y=".5" width="8" height="8" fill="url(#eg)" stroke="#92ccd4" stroke-width="1"/><path d="M0 8.5H9" stroke="#d0d6d8"/><path d="M2 4.5H7" stroke="#000" stroke-width="1"/></svg>
<svg style="left:97px;top:400px;" width="16" height="16" viewBox="0 0 16 16"><path d="M3.5 1.5H11 L13.5 4.5V15.5H3.5Z" fill="#fff" stroke="#9a9a9a" stroke-width="1"/><path d="M11 1.5V4.5H13.5" fill="#eee" stroke="#777" stroke-width=".8"/><path d="M13.5 4.5V15.5H3" stroke="#111" stroke-width="1.4" fill="none"/><path d="M10.5 6.5H13M10.5 8.5H13" stroke="#aaa" stroke-width=".8"/><rect x="0.5" y="7" width="4" height="4" fill="#fff" stroke="#008800" stroke-width="1.1"/><path d="M1.5 15.5V7.5H4.5L6.8 10.5L9 7.5H12V15.5H9.5V11.5L6.8 14.5L4 11.5V15.5Z" fill="#b00000" stroke="#600" stroke-width=".5"/><rect x="4.8" y="2" width="4" height="4" fill="#ffe040" stroke="#a00000" stroke-width="1.1"/></svg>
<div class="t" style="left:118px;top:399px;color:#000;letter-spacing:-0.232px;">Visualization Manager</div>
<div style="left:107px;top:418px;width:1px;height:10px;background:repeating-linear-gradient(#9a9a9a 0 1px,transparent 1px 2px)"></div>
<div style="left:87px;top:418px;width:1px;height:19px;background:repeating-linear-gradient(#9a9a9a 0 1px,transparent 1px 2px)"></div>
<div style="left:47px;top:418px;width:1px;height:19px;background:repeating-linear-gradient(#9a9a9a 0 1px,transparent 1px 2px)"></div>
<div style="left:108px;top:427px;width:9px;height:1px;background:repeating-linear-gradient(90deg,#9a9a9a 0 1px,transparent 1px 2px)"></div>
<svg style="left:117px;top:419px;" width="16" height="16" viewBox="0 0 16 16"><defs><radialGradient id="gl" cx=".4" cy=".35" r=".75"><stop offset="0" stop-color="#8fd0ff"/><stop offset=".55" stop-color="#1e70e0"/><stop offset="1" stop-color="#0830a0"/></radialGradient></defs><circle cx="8.2" cy="8.3" r="6.9" fill="url(#gl)"/><path d="M3 5.5C5 3.5 8 4 8 6.5C8 8.5 6 8.5 5.5 10.5C4.5 12 3 10 2.5 8.5Z" fill="#2aa02a"/><path d="M9.5 2.2C12.5 2.8 14.5 5.5 14.5 8C13 9 11 7.5 10.5 5.5C10 4 9 3 9.5 2.2Z" fill="#3ab03a"/><path d="M8.5 11C10.5 10 12.5 10.5 12 13C10.5 14.5 8.5 13 8.5 11Z" fill="#2aa02a"/><ellipse cx="8.2" cy="8.3" rx="8" ry="3.2" transform="rotate(-40 8.2 8.3)" fill="none" stroke="#d8f0ff" stroke-width="1.1" opacity=".9"/><rect x="8.5" y="4.5" width="4.5" height="4.5" fill="#ffe040" stroke="#a00000" stroke-width="1.1"/><rect x="8.5" y="9" width="4.5" height="4.5" fill="#f04080" stroke="#0000a0" stroke-width="1.1"/><rect x="4" y="9" width="4.5" height="4.5" fill="#ffe040" stroke="#008800" stroke-width="1.1"/></svg>
<div class="t" style="left:138px;top:418px;color:#000;letter-spacing:-0.371px;">WebVisu</div>
<div style="left:87px;top:437px;width:1px;height:10px;background:repeating-linear-gradient(transparent 0 1px,#9a9a9a 1px 2px)"></div>
<div style="left:47px;top:437px;width:1px;height:19px;background:repeating-linear-gradient(transparent 0 1px,#9a9a9a 1px 2px)"></div>
<div style="left:88px;top:446px;width:9px;height:1px;background:repeating-linear-gradient(90deg,transparent 0 1px,#9a9a9a 1px 2px)"></div>
<svg style="left:97px;top:438px;" width="16" height="16" viewBox="0 0 16 16"><path d="M3.5 1.5H11 L13.5 4.5V15.5H3.5Z" fill="#fff" stroke="#9a9a9a" stroke-width="1"/><path d="M11 1.5V4.5H13.5" fill="#eee" stroke="#777" stroke-width=".8"/><path d="M13.5 4.5V15.5H3" stroke="#111" stroke-width="1.4" fill="none"/><path d="M10.5 6.5H13M10.5 8.5H13M10.5 10.5H13M10.5 12.5H13" stroke="#aaa" stroke-width=".8"/><rect x="6" y="3" width="4.5" height="4.5" fill="#ffe040" stroke="#a00000" stroke-width="1.1"/><rect x="6" y="7.5" width="4.5" height="4.5" fill="#f04080" stroke="#0000a0" stroke-width="1.1"/><rect x="1.5" y="7.5" width="4.5" height="4.5" fill="#ffe040" stroke="#008800" stroke-width="1.1"/></svg>
<div class="t" style="left:118px;top:437px;color:#000;letter-spacing:-0.264px;">Visualization</div>
<div style="left:47px;top:456px;width:1px;height:10px;background:repeating-linear-gradient(#9a9a9a 0 1px,transparent 1px 2px)"></div>
<div style="left:47px;top:465px;width:1px;height:10px;background:repeating-linear-gradient(transparent 0 1px,#9a9a9a 1px 2px)"></div>
<div style="left:52px;top:465px;width:5px;height:1px;background:repeating-linear-gradient(90deg,#9a9a9a 0 1px,transparent 1px 2px)"></div>
<svg style="left:42px;top:460px;" width="9" height="9" viewBox="0 0 9 9"><defs><linearGradient id="eg" x1="0" y1="0" x2="0" y2="1"><stop offset="0" stop-color="#fff"/><stop offset=".45" stop-color="#f4f4f4"/><stop offset="1" stop-color="#c8c8c8"/></linearGradient></defs><rect x=".5" y=".5" width="8" height="8" fill="url(#eg)" stroke="#92ccd4" stroke-width="1"/><path d="M0 8.5H9" stroke="#d0d6d8"/><path d="M2 4.5H7" stroke="#000" stroke-width="1"/></svg>
<svg style="left:57px;top:457px;" width="16" height="16" viewBox="0 0 16 16"><g fill="none" stroke="#62f200" stroke-width="1.9"><path d="M4.2 7V5.8Q4.5 2.6 8.2 2.6Q10.8 2.6 12.2 4.4H13.8"/><path d="M2.2 11.8H4Q5.6 13.4 8.2 13.4Q11.8 13.4 12.2 9.8V9"/></g><path d="M1 6.3H7.6L4.3 10.6Z" fill="#62f200"/><path d="M8.7 9.7H15.3L12 5.4Z" fill="#62f200"/></svg>
<svg style="left:74px;top:457px;" width="16" height="16" viewBox="0 0 16 16"><path d="M1.5 4L4 1.5H13.5L11.5 4Z" fill="#c4c4c4" stroke="#8a8a8a" stroke-width=".8"/><path d="M11.5 4L13.5 1.5V13.5L11.5 15.5Z" fill="#a0a0a0"/><path d="M13.6 1.2V13.8L11.8 15.8" stroke="#000" stroke-width="1.3" fill="none"/><rect x="1.5" y="4" width="10" height="11.5" fill="#fff"/><path d="M1.3 4V15.5" stroke="#8a8a8a" stroke-width=".9"/><rect x="3" y="5.2" width="3.6" height="10.3" fill="#c4c4c4"/><rect x="7.4" y="5.2" width="3.4" height="10.3" fill="#cdcdcd"/><path d="M7 4V15.5" stroke="#777" stroke-width=".9"/><path d="M4 1.6L2 4M8.6 1.6L6.8 4" stroke="#888" stroke-width=".6"/><rect x="3.8" y="6.2" width="2" height="2" fill="#00c000"/><rect x="8.2" y="6.6" width="2" height="1" fill="#a00000"/><path d="M1.5 15.6H11.8" stroke="#000" stroke-width="1.3"/></svg>
<div class="t" style="left:94px;top:456px;color:#000;letter-spacing:-0.115px;">EtherCAT_Master_SoftMotion (EtherCAT Master SoftMotion)</div>
<div style="left:67px;top:475px;width:1px;height:10px;background:repeating-linear-gradient(transparent 0 1px,#9a9a9a 1px 2px)"></div>
<div style="left:67px;top:484px;width:1px;height:10px;background:repeating-linear-gradient(#9a9a9a 0 1px,transparent 1px 2px)"></div>
<div style="left:47px;top:475px;width:1px;height:19px;background:repeating-linear-gradient(transparent 0 1px,#9a9a9a 1px 2px)"></div>
<div style="left:72px;top:484px;width:5px;height:1px;background:repeating-linear-gradient(90deg,transparent 0 1px,#9a9a9a 1px 2px)"></div>
<svg style="left:62px;top:479px;" width="9" height="9" viewBox="0 0 9 9"><defs><linearGradient id="eg" x1="0" y1="0" x2="0" y2="1"><stop offset="0" stop-color="#fff"/><stop offset=".45" stop-color="#f4f4f4"/><stop offset="1" stop-color="#c8c8c8"/></linearGradient></defs><rect x=".5" y=".5" width="8" height="8" fill="url(#eg)" stroke="#92ccd4" stroke-width="1"/><path d="M0 8.5H9" stroke="#d0d6d8"/><path d="M2 4.5H7" stroke="#000" stroke-width="1"/></svg>
<svg style="left:77px;top:476px;" width="16" height="16" viewBox="0 0 16 16"><g fill="none" stroke="#62f200" stroke-width="1.9"><path d="M4.2 7V5.8Q4.5 2.6 8.2 2.6Q10.8 2.6 12.2 4.4H13.8"/><path d="M2.2 11.8H4Q5.6 13.4 8.2 13.4Q11.8 13.4 12.2 9.8V9"/></g><path d="M1 6.3H7.6L4.3 10.6Z" fill="#62f200"/><path d="M8.7 9.7H15.3L12 5.4Z" fill="#62f200"/></svg>
<svg style="left:94px;top:476px;" width="16" height="16" viewBox="0 0 16 16"><path d="M1.5 4L4 1.5H13.5L11.5 4Z" fill="#c4c4c4" stroke="#8a8a8a" stroke-width=".8"/><path d="M11.5 4L13.5 1.5V13.5L11.5 15.5Z" fill="#a0a0a0"/><path d="M13.6 1.2V13.8L11.8 15.8" stroke="#000" stroke-width="1.3" fill="none"/><rect x="1.5" y="4" width="10" height="11.5" fill="#fff"/><path d="M1.3 4V15.5" stroke="#8a8a8a" stroke-width=".9"/><rect x="3" y="5.2" width="3.6" height="10.3" fill="#c4c4c4"/><rect x="7.4" y="5.2" width="3.4" height="10.3" fill="#cdcdcd"/><path d="M7 4V15.5" stroke="#777" stroke-width=".9"/><path d="M4 1.6L2 4M8.6 1.6L6.8 4" stroke="#888" stroke-width=".6"/><rect x="3.8" y="6.2" width="2" height="2" fill="#00c000"/><rect x="8.2" y="6.6" width="2" height="1" fill="#a00000"/><path d="M1.5 15.6H11.8" stroke="#000" stroke-width="1.3"/></svg>
<div class="t" style="left:114px;top:475px;color:#000;letter-spacing:-0.352px;">LC10E_V1_04 (LC10E_V1.04)</div>
<div style="left:87px;top:494px;width:1px;height:10px;background:repeating-linear-gradient(#9a9a9a 0 1px,transparent 1px 2px)"></div>
<div style="left:87px;top:503px;width:1px;height:10px;background:repeating-linear-gradient(transparent 0 1px,#9a9a9a 1px 2px)"></div>
<div style="left:67px;top:494px;width:1px;height:19px;background:repeating-linear-gradient(#9a9a9a 0 1px,transparent 1px 2px)"></div>
<div style="left:47px;top:494px;width:1px;height:19px;background:repeating-linear-gradient(#9a9a9a 0 1px,transparent 1px 2px)"></div>
<div style="left:88px;top:503px;width:9px;height:1px;background:repeating-linear-gradient(90deg,#9a9a9a 0 1px,transparent 1px 2px)"></div>
<svg style="left:98px;top:495px;" width="16" height="16" viewBox="0 0 16 16"><path d="M6.8 2.3L13.6 12.8H0.2Z" fill="#e00000" stroke="#000" stroke-width=".7" stroke-linejoin="round"/><path d="M6.8 6.3L10 11.2H3.6Z" fill="#fff"/><path d="M0 12.9H13.8" stroke="#000" stroke-width="1.1"/></svg>
<svg style="left:112px;top:495px;" width="16" height="16" viewBox="0 0 16 16"><path d="M1 4.5H3.8V13H1Z" fill="#000"/><path d="M3.8 4.5L8.8 2.2V14L3.8 12Z" fill="#000"/><path d="M2.3 6.5H5.5L6.5 5.2V12L5.5 11H2.3Z" fill="#8a9a9a"/><rect x="2.6" y="7" width="2.4" height="3.4" fill="#000"/><circle cx="3.6" cy="8.6" r=".9" fill="#f00000"/><path d="M7.5 3V13.5" stroke="#000" stroke-width="1.6"/></svg>
<svg style="left:121px;top:495px;" width="16" height="16" viewBox="0 0 16 16"><path d="M4.5 12L12 4.5" stroke="#000" stroke-width="7.4" stroke-linecap="round"/><path d="M4.5 12L12 4.5" stroke="#a8a8a8" stroke-width="5" stroke-linecap="round"/><path d="M7 7.5L11.5 3" stroke="#cfcfcf" stroke-width="1.2" stroke-dasharray="1,.8"/><ellipse cx="4.6" cy="11.9" rx="2.4" ry="3.2" transform="rotate(45 4.6 11.9)" fill="#909090" stroke="#000" stroke-width=".8"/><path d="M2.2 14.3L6.3 10.2" stroke="#00e0ff" stroke-width="1.6"/><path d="M3 14.8L6.8 11" stroke="#0018e0" stroke-width="1"/></svg>
<div class="t" style="left:141px;top:494px;color:#000;letter-spacing:-0.334px;">X_Axis (SM_Drive_GenericDSP402)</div>
<div style="left:87px;top:513px;width:1px;height:10px;background:repeating-linear-gradient(transparent 0 1px,#9a9a9a 1px 2px)"></div>
<div style="left:67px;top:513px;width:1px;height:19px;background:repeating-linear-gradient(transparent 0 1px,#9a9a9a 1px 2px)"></div>
<div style="left:47px;top:513px;width:1px;height:19px;background:repeating-linear-gradient(transparent 0 1px,#9a9a9a 1px 2px)"></div>
<div style="left:88px;top:522px;width:9px;height:1px;background:repeating-linear-gradient(90deg,transparent 0 1px,#9a9a9a 1px 2px)"></div>
<svg style="left:97px;top:514px;" width="16" height="16" viewBox="0 0 16 16"><rect x="0" y="3" width="2.2" height="8.6" fill="#000"/><path d="M1.8 4.2H3.2L5.8 2M1.8 10.4H3.2L5.8 12.6" stroke="#000" stroke-width="1.5" fill="none"/><path d="M5 1L6.8 2.2L5.6 3.6L4.2 2.4ZM5 13.6L6.8 12.4L5.6 11L4.2 12.2Z" fill="#000"/><rect x="2.2" y="5" width="1" height="5" fill="#9ab"/><circle cx="2.6" cy="7.4" r=".8" fill="#f00"/></svg>
<div class="t" style="left:119px;top:513px;color:#000;letter-spacing:0.295px;">&lt;Empty&gt;</div>
<div style="left:67px;top:532px;width:1px;height:10px;background:repeating-linear-gradient(#9a9a9a 0 1px,transparent 1px 2px)"></div>
<div style="left:47px;top:532px;width:1px;height:19px;background:repeating-linear-gradient(#9a9a9a 0 1px,transparent 1px 2px)"></div>
<div style="left:72px;top:541px;width:5px;height:1px;background:repeating-linear-gradient(90deg,#9a9a9a 0 1px,transparent 1px 2px)"></div>
<svg style="left:62px;top:536px;" width="9" height="9" viewBox="0 0 9 9"><defs><linearGradient id="eg" x1="0" y1="0" x2="0" y2="1"><stop offset="0" stop-color="#fff"/><stop offset=".45" stop-color="#f4f4f4"/><stop offset="1" stop-color="#c8c8c8"/></linearGradient></defs><rect x=".5" y=".5" width="8" height="8" fill="url(#eg)" stroke="#92ccd4" stroke-width="1"/><path d="M0 8.5H9" stroke="#d0d6d8"/><path d="M2 4.5H7" stroke="#000" stroke-width="1"/></svg>
<svg style="left:77px;top:533px;" width="16" height="16" viewBox="0 0 16 16"><g fill="none" stroke="#62f200" stroke-width="1.9"><path d="M4.2 7V5.8Q4.5 2.6 8.2 2.6Q10.8 2.6 12.2 4.4H13.8"/><path d="M2.2 11.8H4Q5.6 13.4 8.2 13.4Q11.8 13.4 12.2 9.8V9"/></g><path d="M1 6.3H7.6L4.3 10.6Z" fill="#62f200"/><path d="M8.7 9.7H15.3L12 5.4Z" fill="#62f200"/></svg>
<svg style="left:94px;top:533px;" width="16" height="16" viewBox="0 0 16 16"><path d="M1.5 4L4 1.5H13.5L11.5 4Z" fill="#c4c4c4" stroke="#8a8a8a" stroke-width=".8"/><path d="M11.5 4L13.5 1.5V13.5L11.5 15.5Z" fill="#a0a0a0"/><path d="M13.6 1.2V13.8L11.8 15.8" stroke="#000" stroke-width="1.3" fill="none"/><rect x="1.5" y="4" width="10" height="11.5" fill="#fff"/><path d="M1.3 4V15.5" stroke="#8a8a8a" stroke-width=".9"/><rect x="3" y="5.2" width="3.6" height="10.3" fill="#c4c4c4"/><rect x="7.4" y="5.2" width="3.4" height="10.3" fill="#cdcdcd"/><path d="M7 4V15.5" stroke="#777" stroke-width=".9"/><path d="M4 1.6L2 4M8.6 1.6L6.8 4" stroke="#888" stroke-width=".6"/><rect x="3.8" y="6.2" width="2" height="2" fill="#00c000"/><rect x="8.2" y="6.6" width="2" height="1" fill="#a00000"/><path d="M1.5 15.6H11.8" stroke="#000" stroke-width="1.3"/></svg>
<div class="t" style="left:114px;top:532px;color:#000;letter-spacing:-0.334px;">LC10E_V1_04_1 (LC10E_V1.04)</div>
<div style="left:87px;top:551px;width:1px;height:10px;background:repeating-linear-gradient(transparent 0 1px,#9a9a9a 1px 2px)"></div>
<div style="left:47px;top:551px;width:1px;height:19px;background:repeating-linear-gradient(transparent 0 1px,#9a9a9a 1px 2px)"></div>
<div style="left:88px;top:560px;width:9px;height:1px;background:repeating-linear-gradient(90deg,transparent 0 1px,#9a9a9a 1px 2px)"></div>
<svg style="left:98px;top:552px;" width="16" height="16" viewBox="0 0 16 16"><g fill="none" stroke="#ff9a30" stroke-width="1.9"><path d="M4.2 7V5.8Q4.5 2.6 8.2 2.6Q10.8 2.6 12.2 4.4H13.8"/><path d="M2.2 11.8H4Q5.6 13.4 8.2 13.4Q11.8 13.4 12.2 9.8V9"/></g><path d="M1 6.3H7.6L4.3 10.6Z" fill="#ff9a30"/><path d="M8.7 9.7H15.3L12 5.4Z" fill="#ff9a30"/></svg>
<svg style="left:112px;top:552px;" width="16" height="16" viewBox="0 0 16 16"><path d="M1 4.5H3.8V13H1Z" fill="#000"/><path d="M3.8 4.5L8.8 2.2V14L3.8 12Z" fill="#000"/><path d="M2.3 6.5H5.5L6.5 5.2V12L5.5 11H2.3Z" fill="#8a9a9a"/><rect x="2.6" y="7" width="2.4" height="3.4" fill="#000"/><circle cx="3.6" cy="8.6" r=".9" fill="#f00000"/><path d="M7.5 3V13.5" stroke="#000" stroke-width="1.6"/></svg>
<svg style="left:121px;top:552px;" width="16" height="16" viewBox="0 0 16 16"><path d="M4.5 12L12 4.5" stroke="#000" stroke-width="7.4" stroke-linecap="round"/><path d="M4.5 12L12 4.5" stroke="#a8a8a8" stroke-width="5" stroke-linecap="round"/><path d="M7 7.5L11.5 3" stroke="#cfcfcf" stroke-width="1.2" stroke-dasharray="1,.8"/><ellipse cx="4.6" cy="11.9" rx="2.4" ry="3.2" transform="rotate(45 4.6 11.9)" fill="#909090" stroke="#000" stroke-width=".8"/><path d="M2.2 14.3L6.3 10.2" stroke="#00e0ff" stroke-width="1.6"/><path d="M3 14.8L6.8 11" stroke="#0018e0" stroke-width="1"/></svg>
<div class="t" style="left:142px;top:551px;color:#000;letter-spacing:-0.292px;">y_Axis (SM_Drive_GenericDSP402)</div>
<div style="left:47px;top:570px;width:1px;height:10px;background:repeating-linear-gradient(#9a9a9a 0 1px,transparent 1px 2px)"></div>
<div style="left:48px;top:579px;width:9px;height:1px;background:repeating-linear-gradient(90deg,#9a9a9a 0 1px,transparent 1px 2px)"></div>
<svg style="left:57px;top:571px;" width="16" height="16" viewBox="0 0 16 16"><g fill="none" stroke="#62f200" stroke-width="1.9"><path d="M4.2 7V5.8Q4.5 2.6 8.2 2.6Q10.8 2.6 12.2 4.4H13.8"/><path d="M2.2 11.8H4Q5.6 13.4 8.2 13.4Q11.8 13.4 12.2 9.8V9"/></g><path d="M1 6.3H7.6L4.3 10.6Z" fill="#62f200"/><path d="M8.7 9.7H15.3L12 5.4Z" fill="#62f200"/></svg>
<svg style="left:74px;top:571px;" width="16" height="16" viewBox="0 0 16 16"><path d="M2 2.5H4.5V4.5L6 5.5H8.5L9.5 7.5V10" stroke="#0000ff" stroke-width="2.4" fill="none" stroke-linejoin="bevel"/><path d="M7 10.5H11L12 11.5H12.5V14.5H5.5V11.5H6Z" fill="#000"/><rect x="6.8" y="12" width="4.6" height="1.5" fill="#c8c8c8"/><circle cx="7.6" cy="12.2" r=".6" fill="#a09000"/></svg>
<div class="t" style="left:94px;top:570px;color:#000;letter-spacing:-0.181px;">SoftMotion General Axis Pool</div>
</div>
<div style="left:345px;top:41px;width:17px;height:17px;background:#e6e6e6;border:1px solid #cfcfcf;box-sizing:border-box"></div>
<svg style="left:350px;top:47px;" width="9" height="6" viewBox="0 0 9 6"><path d="M0 0H8L4 5Z" fill="#000"/></svg>
<div style="left:367px;top:17px;width:961px;height:1px;background:#a0a0a0"></div>
<div style="left:367px;top:18px;width:961px;height:20px;background:#f0f0f0"></div>
<div style="left:367px;top:17px;width:1px;height:659px;background:#a0a0a0"></div>
<div style="left:368px;top:38px;width:960px;height:638px;background:#fff"></div>
<div style="left:368px;top:38px;width:960px;height:2px;background:#f2f2f2"></div>
<div style="left:368px;top:37px;width:960px;height:1px;background:#a8a8a8"></div>
<div style="left:368px;top:18px;width:960px;height:20px;overflow:hidden;">
<svg style="left:867px;top:2px;overflow:visible" width="167" height="18" viewBox="0 0 167 18"><defs><linearGradient id="tg" x1="0" y1="0" x2="0" y2="1"><stop offset="0" stop-color="#f6f6f6"/><stop offset="1" stop-color="#fbfbfb"/></linearGradient></defs><path d="M0.5 17.5 L18.5 0.5 H162.5 Q164.5 0.5 164.5 2.5 V17.5V18H0Z" fill="url(#tg)"/><path d="M0.5 17.5 L18.5 0.5 H162.5 Q164.5 0.5 164.5 2.5 V17.5" fill="none" stroke="#a5a5a5" stroke-width="1"/><path d="M0 17.5H167" stroke="#a8a8a8"/></svg>
<svg style="left:882px;top:4px;" width="16" height="16" viewBox="0 0 16 16"><path d="M1 9.5L7.5 2L9.2 1.5V4.5L13 8.5V13.5L10.8 15.5H4L1 12.5Z" fill="#00f0f8" stroke="#000" stroke-width="1"/><path d="M8.2 3.5V7L12.5 11" stroke="#000" stroke-width=".9" fill="none"/><path d="M13.6 9.5V14" stroke="#0aa" stroke-width=".8"/><path d="M3 11.5L11 2.5" stroke="#ee0000" stroke-width="1.5"/><path d="M15.4 2.4C15 1.2 11.8 1 11.8 4C11.8 7 15.2 7 15.4 5.2V4.5H13.8" stroke="#000" stroke-width="1.3" fill="#fff"/></svg>
<div class="t" style="left:916px;top:1px;color:#000;letter-spacing:-0.446px;">CNC [Device: PLC Logic: Application]</div>
<svg style="left:761px;top:2px;overflow:visible" width="119" height="18" viewBox="0 0 119 18"><defs><linearGradient id="tg" x1="0" y1="0" x2="0" y2="1"><stop offset="0" stop-color="#f6f6f6"/><stop offset="1" stop-color="#fbfbfb"/></linearGradient></defs><path d="M0.5 17.5 L18.5 0.5 H114.5 Q116.5 0.5 116.5 2.5 V17.5V18H0Z" fill="url(#tg)"/><path d="M0.5 17.5 L18.5 0.5 H114.5 Q116.5 0.5 116.5 2.5 V17.5" fill="none" stroke="#a5a5a5" stroke-width="1"/><path d="M0 17.5H119" stroke="#a8a8a8"/></svg>
<svg style="left:776px;top:4px;" width="16" height="16" viewBox="0 0 16 16"><g transform="translate(-0.6,1.5) scale(.68)"><path d="M1 4.5H3.8V13H1Z" fill="#000"/><path d="M3.8 4.5L8.8 2.2V14L3.8 12Z" fill="#000"/><path d="M2.3 6.5H5.5L6.5 5.2V12L5.5 11H2.3Z" fill="#8a9a9a"/><rect x="2.6" y="7" width="2.4" height="3.4" fill="#000"/><circle cx="3.6" cy="8.6" r=".9" fill="#f00000"/><path d="M7.5 3V13.5" stroke="#000" stroke-width="1.6"/></g><g transform="translate(4.6,1.4) scale(.72)"><path d="M4.5 12L12 4.5" stroke="#000" stroke-width="8.4" stroke-linecap="round"/><path d="M4.5 12L12 4.5" stroke="#000" stroke-width="7.4" stroke-linecap="round"/><path d="M4.5 12L12 4.5" stroke="#a8a8a8" stroke-width="5" stroke-linecap="round"/><path d="M7 7.5L11.5 3" stroke="#cfcfcf" stroke-width="1.2" stroke-dasharray="1,.8"/><ellipse cx="4.6" cy="11.9" rx="2.4" ry="3.2" transform="rotate(45 4.6 11.9)" fill="#909090" stroke="#000" stroke-width=".8"/><path d="M2.2 14.3L6.3 10.2" stroke="#00e0ff" stroke-width="1.6"/><path d="M3 14.8L6.8 11" stroke="#0018e0" stroke-width="1"/></g></svg>
<div class="t" style="left:803px;top:1px;color:#000;letter-spacing:0.345px;">&lt;Empty&gt;</div>
<svg style="left:623px;top:2px;overflow:visible" width="151" height="18" viewBox="0 0 151 18"><defs><linearGradient id="tg" x1="0" y1="0" x2="0" y2="1"><stop offset="0" stop-color="#f6f6f6"/><stop offset="1" stop-color="#fbfbfb"/></linearGradient></defs><path d="M0.5 17.5 L18.5 0.5 H146.5 Q148.5 0.5 148.5 2.5 V17.5V18H0Z" fill="url(#tg)"/><path d="M0.5 17.5 L18.5 0.5 H146.5 Q148.5 0.5 148.5 2.5 V17.5" fill="none" stroke="#a5a5a5" stroke-width="1"/><path d="M0 17.5H151" stroke="#a8a8a8"/></svg>
<svg style="left:639px;top:4px;" width="16" height="16" viewBox="0 0 16 16"><g fill="#fff" stroke="#000" stroke-width="1.1"><path d="M1 10.5L8 6.5L15 10.5L8 14.5Z"/><path d="M1 8.5L8 4.5L15 8.5L8 12.5Z"/><path d="M1 6L8 2L15 6L8 10Z"/></g><path d="M7.5 0.5V5" stroke="#000080" stroke-width="2.2"/><path d="M4.5 4L7.5 8L10.5 4Z" fill="#000080"/></svg>
<div class="t" style="left:666px;top:1px;color:#000;letter-spacing:-0.085px;">EtherCAT_Task</div>
<svg style="left:478px;top:2px;overflow:visible" width="158" height="18" viewBox="0 0 158 18"><defs><linearGradient id="tg" x1="0" y1="0" x2="0" y2="1"><stop offset="0" stop-color="#f6f6f6"/><stop offset="1" stop-color="#fbfbfb"/></linearGradient></defs><path d="M0.5 17.5 L18.5 0.5 H153.5 Q155.5 0.5 155.5 2.5 V17.5V18H0Z" fill="url(#tg)"/><path d="M0.5 17.5 L18.5 0.5 H153.5 Q155.5 0.5 155.5 2.5 V17.5" fill="none" stroke="#a5a5a5" stroke-width="1"/><path d="M0 17.5H158" stroke="#a8a8a8"/></svg>
<svg style="left:493px;top:4px;" width="16" height="16" viewBox="0 0 16 16"><path d="M1.5 5.5L4.5 2.5H6.5L3.5 5.5Z" fill="#00e8f0" stroke="#000" stroke-width=".8"/><path d="M1.5 5.5H3.5V15.5H1.5Z" fill="#00e8f0" stroke="#000" stroke-width=".8"/><path d="M3.5 5.5L6.5 2.5V4L4 6.5Z" fill="#00c8d0" stroke="#000" stroke-width=".6"/><path d="M3.5 7.5L6 5H8L5.5 7.5Z" fill="#ff2020" stroke="#000" stroke-width=".8"/><rect x="3.5" y="7.5" width="3.5" height="8" fill="#ee0000" stroke="#000" stroke-width=".8"/><path d="M5 8V15" stroke="#900" stroke-width=".8"/><path d="M7 7.5L10 4.5H15L12 7.5Z" fill="#ffff40" stroke="#000" stroke-width=".8"/><rect x="7" y="7.5" width="5" height="8" fill="#f0f000" stroke="#000" stroke-width=".8"/><path d="M8.5 8V15" stroke="#909000" stroke-width="1"/><path d="M12 7.5L15 4.5V12.5L12 15.5Z" fill="#ffff00" stroke="#000" stroke-width=".8"/></svg>
<div class="t" style="left:522px;top:1px;color:#000;letter-spacing:-0.064px;">Library Manager</div>
<svg style="left:298px;top:2px;overflow:visible" width="103" height="18" viewBox="0 0 103 18"><defs><linearGradient id="tg" x1="0" y1="0" x2="0" y2="1"><stop offset="0" stop-color="#f6f6f6"/><stop offset="1" stop-color="#fbfbfb"/></linearGradient></defs><path d="M0.5 17.5 L18.5 0.5 H98.5 Q100.5 0.5 100.5 2.5 V17.5V18H0Z" fill="url(#tg)"/><path d="M0.5 17.5 L18.5 0.5 H98.5 Q100.5 0.5 100.5 2.5 V17.5" fill="none" stroke="#a5a5a5" stroke-width="1"/><path d="M0 17.5H103" stroke="#a8a8a8"/></svg>
<svg style="left:314px;top:4px;" width="16" height="16" viewBox="0 0 16 16"><g transform="translate(-0.6,1.5) scale(.68)"><path d="M1 4.5H3.8V13H1Z" fill="#000"/><path d="M3.8 4.5L8.8 2.2V14L3.8 12Z" fill="#000"/><path d="M2.3 6.5H5.5L6.5 5.2V12L5.5 11H2.3Z" fill="#8a9a9a"/><rect x="2.6" y="7" width="2.4" height="3.4" fill="#000"/><circle cx="3.6" cy="8.6" r=".9" fill="#f00000"/><path d="M7.5 3V13.5" stroke="#000" stroke-width="1.6"/></g><g transform="translate(4.6,1.4) scale(.72)"><path d="M4.5 12L12 4.5" stroke="#000" stroke-width="8.4" stroke-linecap="round"/><path d="M4.5 12L12 4.5" stroke="#000" stroke-width="7.4" stroke-linecap="round"/><path d="M4.5 12L12 4.5" stroke="#a8a8a8" stroke-width="5" stroke-linecap="round"/><path d="M7 7.5L11.5 3" stroke="#cfcfcf" stroke-width="1.2" stroke-dasharray="1,.8"/><ellipse cx="4.6" cy="11.9" rx="2.4" ry="3.2" transform="rotate(45 4.6 11.9)" fill="#909090" stroke="#000" stroke-width=".8"/><path d="M2.2 14.3L6.3 10.2" stroke="#00e0ff" stroke-width="1.6"/><path d="M3 14.8L6.8 11" stroke="#0018e0" stroke-width="1"/></g></svg>
<div class="t" style="left:339px;top:1px;color:#000;letter-spacing:0.039px;">y_Axis</div>
<svg style="left:157px;top:2px;overflow:visible" width="154" height="18" viewBox="0 0 154 18"><defs><linearGradient id="tg" x1="0" y1="0" x2="0" y2="1"><stop offset="0" stop-color="#f6f6f6"/><stop offset="1" stop-color="#fbfbfb"/></linearGradient></defs><path d="M0.5 17.5 L18.5 0.5 H149.5 Q151.5 0.5 151.5 2.5 V17.5V18H0Z" fill="url(#tg)"/><path d="M0.5 17.5 L18.5 0.5 H149.5 Q151.5 0.5 151.5 2.5 V17.5" fill="none" stroke="#a5a5a5" stroke-width="1"/><path d="M0 17.5H154" stroke="#a8a8a8"/></svg>
<svg style="left:174px;top:4px;" width="16" height="16" viewBox="0 0 16 16"><path d="M1.5 4L4 1.5H13.5L11.5 4Z" fill="#c4c4c4" stroke="#8a8a8a" stroke-width=".8"/><path d="M11.5 4L13.5 1.5V13.5L11.5 15.5Z" fill="#a0a0a0"/><path d="M13.6 1.2V13.8L11.8 15.8" stroke="#000" stroke-width="1.3" fill="none"/><rect x="1.5" y="4" width="10" height="11.5" fill="#fff"/><path d="M1.3 4V15.5" stroke="#8a8a8a" stroke-width=".9"/><rect x="3" y="5.2" width="3.6" height="10.3" fill="#c4c4c4"/><rect x="7.4" y="5.2" width="3.4" height="10.3" fill="#cdcdcd"/><path d="M7 4V15.5" stroke="#777" stroke-width=".9"/><path d="M4 1.6L2 4M8.6 1.6L6.8 4" stroke="#888" stroke-width=".6"/><rect x="3.8" y="6.2" width="2" height="2" fill="#00c000"/><rect x="8.2" y="6.6" width="2" height="1" fill="#a00000"/><path d="M1.5 15.6H11.8" stroke="#000" stroke-width="1.3"/></svg>
<div class="t" style="left:199px;top:1px;color:#000;letter-spacing:-0.333px;">LC10E_V1_04_1</div>
<svg style="left:30px;top:2px;overflow:visible" width="140" height="18" viewBox="0 0 140 18"><defs><linearGradient id="tg" x1="0" y1="0" x2="0" y2="1"><stop offset="0" stop-color="#f6f6f6"/><stop offset="1" stop-color="#fbfbfb"/></linearGradient></defs><path d="M0.5 17.5 L18.5 0.5 H135.5 Q137.5 0.5 137.5 2.5 V17.5V18H0Z" fill="url(#tg)"/><path d="M0.5 17.5 L18.5 0.5 H135.5 Q137.5 0.5 137.5 2.5 V17.5" fill="none" stroke="#a5a5a5" stroke-width="1"/><path d="M0 17.5H140" stroke="#a8a8a8"/></svg>
<svg style="left:47px;top:4px;" width="16" height="16" viewBox="0 0 16 16"><path d="M1.5 4L4 1.5H13.5L11.5 4Z" fill="#c4c4c4" stroke="#8a8a8a" stroke-width=".8"/><path d="M11.5 4L13.5 1.5V13.5L11.5 15.5Z" fill="#a0a0a0"/><path d="M13.6 1.2V13.8L11.8 15.8" stroke="#000" stroke-width="1.3" fill="none"/><rect x="1.5" y="4" width="10" height="11.5" fill="#fff"/><path d="M1.3 4V15.5" stroke="#8a8a8a" stroke-width=".9"/><rect x="3" y="5.2" width="3.6" height="10.3" fill="#c4c4c4"/><rect x="7.4" y="5.2" width="3.4" height="10.3" fill="#cdcdcd"/><path d="M7 4V15.5" stroke="#777" stroke-width=".9"/><path d="M4 1.6L2 4M8.6 1.6L6.8 4" stroke="#888" stroke-width=".6"/><rect x="3.8" y="6.2" width="2" height="2" fill="#00c000"/><rect x="8.2" y="6.6" width="2" height="1" fill="#a00000"/><path d="M1.5 15.6H11.8" stroke="#000" stroke-width="1.3"/></svg>
<div class="t" style="left:72px;top:1px;color:#000;letter-spacing:-0.396px;">LC10E_V1_04</div>
<svg style="left:-68px;top:2px;overflow:visible" width="111" height="18" viewBox="0 0 111 18"><defs><linearGradient id="tg" x1="0" y1="0" x2="0" y2="1"><stop offset="0" stop-color="#f6f6f6"/><stop offset="1" stop-color="#fbfbfb"/></linearGradient></defs><path d="M0.5 17.5 L18.5 0.5 H106.5 Q108.5 0.5 108.5 2.5 V17.5V18H0Z" fill="url(#tg)"/><path d="M0.5 17.5 L18.5 0.5 H106.5 Q108.5 0.5 108.5 2.5 V17.5" fill="none" stroke="#a5a5a5" stroke-width="1"/><path d="M0 17.5H111" stroke="#a8a8a8"/></svg>
<div class="t" style="left:-3px;top:1px;color:#000;">ol</div>
<svg style="left:388px;top:2px;overflow:visible" width="103" height="18" viewBox="0 0 103 18"><defs><linearGradient id="tg" x1="0" y1="0" x2="0" y2="1"><stop offset="0" stop-color="#f6f6f6"/><stop offset="1" stop-color="#fbfbfb"/></linearGradient></defs><path d="M0.5 17.5 L18.5 0.5 H98.5 Q100.5 0.5 100.5 2.5 V17.5V18H0Z" fill="#ffffff"/><path d="M0.5 17.5 L18.5 0.5 H98.5 Q100.5 0.5 100.5 2.5 V17.5" fill="none" stroke="#a5a5a5" stroke-width="1"/></svg>
<svg style="left:404px;top:4px;" width="16" height="16" viewBox="0 0 16 16"><g transform="translate(-0.6,1.5) scale(.68)"><path d="M1 4.5H3.8V13H1Z" fill="#000"/><path d="M3.8 4.5L8.8 2.2V14L3.8 12Z" fill="#000"/><path d="M2.3 6.5H5.5L6.5 5.2V12L5.5 11H2.3Z" fill="#8a9a9a"/><rect x="2.6" y="7" width="2.4" height="3.4" fill="#000"/><circle cx="3.6" cy="8.6" r=".9" fill="#f00000"/><path d="M7.5 3V13.5" stroke="#000" stroke-width="1.6"/></g><g transform="translate(4.6,1.4) scale(.72)"><path d="M4.5 12L12 4.5" stroke="#000" stroke-width="8.4" stroke-linecap="round"/><path d="M4.5 12L12 4.5" stroke="#000" stroke-width="7.4" stroke-linecap="round"/><path d="M4.5 12L12 4.5" stroke="#a8a8a8" stroke-width="5" stroke-linecap="round"/><path d="M7 7.5L11.5 3" stroke="#cfcfcf" stroke-width="1.2" stroke-dasharray="1,.8"/><ellipse cx="4.6" cy="11.9" rx="2.4" ry="3.2" transform="rotate(45 4.6 11.9)" fill="#909090" stroke="#000" stroke-width=".8"/><path d="M2.2 14.3L6.3 10.2" stroke="#00e0ff" stroke-width="1.6"/><path d="M3 14.8L6.8 11" stroke="#0018e0" stroke-width="1"/></g></svg>
<div class="t" style="left:426px;top:1px;color:#000;font-weight:bold;letter-spacing:0.479px;">X_Axis</div>
<svg style="left:475px;top:7px;" width="9" height="9" viewBox="0 0 9 9"><path d="M1 1L8 8M8 1L1 8" stroke="#000" stroke-width="2"/></svg>
</div>
<div style="left:374px;top:45px;width:954px;height:1px;background:#a5a5a5"></div>
<div style="left:375px;top:46px;width:953px;height:1px;background:#f0f0f0"></div>
<div style="left:375px;top:47px;width:953px;height:1px;background:#a5a5a5"></div>
<div style="left:374px;top:45px;width:1px;height:258px;background:#a0a0a0"></div>
<svg style="left:374px;top:82px" width="202" height="251" viewBox="0 0 202 251"><path d="M0.5 0.5H201.5V249.5L0.5 220.5Z" fill="#f0f0f0"/><path d="M3 0.5H201.5V251M0.5 220.5L201.5 249.5" fill="none" stroke="#a0a0a0" stroke-width="1"/></svg>
<div style="left:575px;top:82px;width:1px;height:594px;background:#a0a0a0"></div>
<div style="left:375px;top:48px;width:3px;height:34px;background:#0a74da"></div>
<div class="t" style="left:385px;top:54px;color:#000;letter-spacing:-0.023px;">General</div>
<div style="left:375px;top:83px;width:3px;height:34px;background:#63b3f5"></div>
<div style="left:400px;top:117px;width:149px;height:1px;background:#fdfdfd"></div>
<div class="t" style="left:385px;top:89px;color:#000;letter-spacing:0.254px;">Scaling/Mapping</div>
<div style="left:375px;top:118px;width:3px;height:34px;background:#63b3f5"></div>
<div style="left:400px;top:152px;width:149px;height:1px;background:#fdfdfd"></div>
<div class="t" style="left:385px;top:124px;color:#000;letter-spacing:0.216px;">Commissioning</div>
<div style="left:375px;top:153px;width:3px;height:34px;background:#63b3f5"></div>
<div style="left:400px;top:187px;width:149px;height:1px;background:#fdfdfd"></div>
<div class="t" style="left:385px;top:154px;color:#000;letter-spacing:-0.160px;">SM_Drive_ETC_GenericDSP402: I/O</div>
<div class="t" style="left:385px;top:166px;color:#000;letter-spacing:0.449px;">Mapping</div>
<div style="left:375px;top:188px;width:3px;height:34px;background:#63b3f5"></div>
<div style="left:400px;top:222px;width:149px;height:1px;background:#fdfdfd"></div>
<div class="t" style="left:385px;top:189px;color:#000;letter-spacing:-0.234px;">SM_Drive_ETC_GenericDSP402:</div>
<div class="t" style="left:385px;top:201px;color:#000;letter-spacing:0.021px;">IEC Objects</div>
<div style="left:375px;top:223px;width:3px;height:34px;background:#63b3f5"></div>
<div style="left:400px;top:257px;width:149px;height:1px;background:#fdfdfd"></div>
<div class="t" style="left:385px;top:229px;color:#000;letter-spacing:0.082px;">Status</div>
<div style="left:375px;top:258px;width:3px;height:34px;background:#63b3f5"></div>
<div style="left:400px;top:292px;width:149px;height:1px;background:#fdfdfd"></div>
<div class="t" style="left:385px;top:264px;color:#000;letter-spacing:0.507px;">Information</div>
<div style="left:585px;top:64px;width:468px;height:242px;border:1px solid #dcdcdc;box-sizing:border-box"></div>
<div style="left:592px;top:64px;width:97px;height:1px;background:#fff"></div>
<div class="t" style="left:594px;top:54px;color:#000;letter-spacing:-0.077px;">Axis type and limits</div>
<div style="left:601px;top:82px;width:13px;height:13px;border:1px solid #c7c7c7;background:#fff;box-sizing:border-box"></div>
<div class="t" style="left:618px;top:78px;color:#6d6d6d;letter-spacing:0.385px;">Virtual mode</div>
<svg style="left:600.8px;top:103.9px;" width="13" height="13" viewBox="0 0 13 13"><circle cx="6.5" cy="6.5" r="6" fill="#fff" stroke="#cacaca" stroke-width="1"/></svg>
<div class="t" style="left:618px;top:101px;color:#6d6d6d;letter-spacing:0.404px;">Modulo</div>
<svg style="left:600.8px;top:127.9px;" width="13" height="13" viewBox="0 0 13 13"><circle cx="6.5" cy="6.5" r="6" fill="#fff" stroke="#cacaca" stroke-width="1"/><circle cx="6.5" cy="6.5" r="3.3" fill="#c6c6c6"/></svg>
<div class="t" style="left:618px;top:125px;color:#6d6d6d;letter-spacing:0.379px;">Finite</div>
<div style="left:705px;top:80px;width:340px;height:63px;border:1px solid #dcdcdc;box-sizing:border-box"></div>
<div style="left:711px;top:80px;width:75px;height:1px;background:#fff"></div>
<div class="t" style="left:713px;top:70px;color:#000;letter-spacing:-0.024px;">Software limits</div>
<div style="left:721px;top:93px;width:13px;height:13px;border:1px solid #c7c7c7;background:#fff;box-sizing:border-box"></div>
<div class="t" style="left:738px;top:89px;color:#6d6d6d;letter-spacing:0.294px;">Activated</div>
<div class="t" style="left:823px;top:89px;color:#000;letter-spacing:0.411px;">Negative [u]:</div>
<div style="left:959px;top:88px;width:80px;height:21px;background:#f0f0f0;border:1px solid #c9c9c9;box-shadow:inset 0 0 0 1px #fff;box-sizing:border-box"></div>
<div class="t" style="left:962px;top:88px;color:#6d6d6d;">0.0</div>
<div class="t" style="left:823px;top:115px;color:#000;letter-spacing:0.445px;">Positive [u]:</div>
<div style="left:959px;top:114px;width:80px;height:22px;background:#f0f0f0;border:1px solid #c9c9c9;box-shadow:inset 0 0 0 1px #fff;box-sizing:border-box"></div>
<div class="t" style="left:963px;top:114px;color:#6d6d6d;letter-spacing:-0.091px;">1000.0</div>
<div style="left:705px;top:156px;width:340px;height:62px;border:1px solid #dcdcdc;box-sizing:border-box"></div>
<div style="left:712px;top:156px;width:117px;height:1px;background:#fff"></div>
<div class="t" style="left:714px;top:146px;color:#000;letter-spacing:0.078px;">Software error reaction</div>
<div class="t" style="left:835px;top:165px;color:#000;letter-spacing:0.414px;">Deceleration [u/s²]:</div>
<div style="left:959px;top:165px;width:80px;height:22px;background:#f0f0f0;border:1px solid #c9c9c9;box-shadow:inset 0 0 0 1px #fff;box-sizing:border-box"></div>
<div class="t" style="left:962px;top:165px;color:#6d6d6d;">0</div>
<div class="t" style="left:835px;top:191px;color:#000;letter-spacing:0.217px;">Max. distance [u]:</div>
<div style="left:959px;top:192px;width:80px;height:21px;background:#f0f0f0;border:1px solid #c9c9c9;box-shadow:inset 0 0 0 1px #fff;box-sizing:border-box"></div>
<div class="t" style="left:962px;top:191px;color:#6d6d6d;">0</div>
<div style="left:591px;top:232px;width:454px;height:66px;border:1px solid #dcdcdc;box-sizing:border-box"></div>
<div style="left:597px;top:232px;width:71px;height:1px;background:#fff"></div>
<div class="t" style="left:599px;top:223px;color:#000;letter-spacing:-0.285px;">Dynamic limits</div>
<div class="t" style="left:596px;top:246px;color:#000;letter-spacing:0.528px;">Velocity [u/s]:</div>
<div class="t" style="left:707px;top:246px;color:#000;letter-spacing:0.325px;">Acceleration [u/s²]</div>
<div class="t" style="left:818px;top:246px;color:#000;letter-spacing:0.330px;">Deceleration [u/s²]</div>
<div class="t" style="left:929px;top:246px;color:#000;letter-spacing:0.532px;">Jerk [u/s³]:</div>
<div style="left:597px;top:271px;width:105px;height:21px;background:#f0f0f0;border:1px solid #c9c9c9;box-shadow:inset 0 0 0 1px #fff;box-sizing:border-box"></div>
<div class="t" style="left:601px;top:271px;color:#6d6d6d;">145</div>
<div style="left:708px;top:271px;width:105px;height:21px;background:#f0f0f0;border:1px solid #c9c9c9;box-shadow:inset 0 0 0 1px #fff;box-sizing:border-box"></div>
<div class="t" style="left:711px;top:271px;color:#6d6d6d;">5000</div>
<div style="left:819px;top:271px;width:105px;height:21px;background:#f0f0f0;border:1px solid #c9c9c9;box-shadow:inset 0 0 0 1px #fff;box-sizing:border-box"></div>
<div class="t" style="left:822px;top:271px;color:#6d6d6d;">5000</div>
<div style="left:930px;top:271px;width:105px;height:21px;background:#f0f0f0;border:1px solid #c9c9c9;box-shadow:inset 0 0 0 1px #fff;box-sizing:border-box"></div>
<div class="t" style="left:933px;top:271px;color:#6d6d6d;">50000</div>
<div style="left:1059px;top:64px;width:186px;height:103px;border:1px solid #dcdcdc;box-sizing:border-box"></div>
<div style="left:1066px;top:64px;width:93px;height:1px;background:#fff"></div>
<div class="t" style="left:1068px;top:54px;color:#000;letter-spacing:-0.040px;">Velocity ramp type</div>
<svg style="left:1065.0px;top:78.8px;" width="13" height="13" viewBox="0 0 13 13"><circle cx="6.5" cy="6.5" r="6" fill="#fff" stroke="#cacaca" stroke-width="1"/><circle cx="6.5" cy="6.5" r="3.3" fill="#c6c6c6"/></svg>
<div class="t" style="left:1083px;top:75px;color:#6d6d6d;letter-spacing:0.248px;">Trapezoid</div>
<svg style="left:1065.0px;top:100.9px;" width="13" height="13" viewBox="0 0 13 13"><circle cx="6.5" cy="6.5" r="6" fill="#fff" stroke="#cacaca" stroke-width="1"/></svg>
<div class="t" style="left:1083px;top:97px;color:#6d6d6d;letter-spacing:0.279px;">Sin²</div>
<svg style="left:1065.0px;top:122.9px;" width="13" height="13" viewBox="0 0 13 13"><circle cx="6.5" cy="6.5" r="6" fill="#fff" stroke="#cacaca" stroke-width="1"/></svg>
<div class="t" style="left:1083px;top:119px;color:#6d6d6d;letter-spacing:0.212px;">Quadratic</div>
<svg style="left:1065.0px;top:144.9px;" width="13" height="13" viewBox="0 0 13 13"><circle cx="6.5" cy="6.5" r="6" fill="#fff" stroke="#cacaca" stroke-width="1"/></svg>
<div class="t" style="left:1083px;top:141px;color:#6d6d6d;letter-spacing:0.308px;">Quadratic (smooth)</div>
<div style="left:1059px;top:181px;width:186px;height:37px;border:1px solid #dcdcdc;box-sizing:border-box"></div>
<div style="left:1066px;top:181px;width:67px;height:1px;background:#fff"></div>
<div class="t" style="left:1068px;top:171px;color:#000;letter-spacing:0.110px;">Identification</div>
<div class="t" style="left:1070px;top:190px;color:#000;letter-spacing:1.069px;">ID:</div>
<div style="left:1148px;top:190px;width:91px;height:21px;background:#f0f0f0;border:1px solid #c9c9c9;box-shadow:inset 0 0 0 1px #fff;box-sizing:border-box"></div>
<div class="t" style="left:1151px;top:190px;color:#6d6d6d;">0</div>
<div style="left:1059px;top:232px;width:186px;height:74px;border:1px solid #dcdcdc;box-sizing:border-box"></div>
<div style="left:1065px;top:232px;width:115px;height:1px;background:#fff"></div>
<div class="t" style="left:1067px;top:222px;color:#000;letter-spacing:-0.173px;">Position lag supervision</div>
<div style="left:1065px;top:241px;width:130px;height:21px;background:#cccccc;border:1px solid #c4c4c4;box-sizing:border-box"></div>
<div class="t" style="left:1069px;top:242px;color:#6d6d6d;letter-spacing:0.028px;">stay enabled</div>
<svg style="left:1182px;top:249px;" width="10" height="6" viewBox="0 0 10 6"><path d="M0.5 0.5L4.5 4.5L8.5 0.5" stroke="#8a8a8a" fill="none"/></svg>
<div class="t" style="left:1065px;top:271px;color:#000;letter-spacing:0.430px;">Lag limit [u]:</div>
<div style="left:1148px;top:270px;width:91px;height:21px;background:#f0f0f0;border:1px solid #c9c9c9;box-shadow:inset 0 0 0 1px #fff;box-sizing:border-box"></div>
<div class="t" style="left:1151px;top:270px;color:#6d6d6d;">1.0</div>
<div style="left:580px;top:320px;width:666px;height:254px;border:1px solid #dcdcdc;box-sizing:border-box"></div>
<div style="left:586px;top:320px;width:35px;height:1px;background:#fff"></div>
<div class="t" style="left:588px;top:310px;color:#000;letter-spacing:-0.199px;">Online</div>
<div style="left:586px;top:332px;width:268px;height:94px;border:1px solid #a9a9a9;background:#ebebeb;box-sizing:border-box"></div>
<div style="left:587px;top:333px;width:262px;height:18px;background:#fff"></div>
<div style="left:682px;top:333px;width:1px;height:18px;background:#e5e5e5"></div>
<div style="left:758px;top:333px;width:1px;height:18px;background:#e5e5e5"></div>
<div class="t" style="left:594px;top:332px;color:#000;">variable</div>
<div class="t" style="left:690px;top:332px;color:#000;letter-spacing:0.071px;">set value</div>
<div class="t" style="left:766px;top:332px;color:#000;">actual value</div>
<div style="left:587px;top:351px;width:262px;height:18px;background:#fff"></div>
<div style="left:588px;top:351px;width:94px;height:17px;background:#0078d7"></div>
<div style="left:684px;top:351px;width:74px;height:17px;background:#f0f0f0"></div>
<div style="left:760px;top:351px;width:88px;height:17px;background:#f0f0f0"></div>
<div class="t" style="left:591px;top:350px;color:#fff;letter-spacing:-0.157px;">Position [u]</div>
<div class="t" style="left:715px;top:350px;color:#000;letter-spacing:0.122px;">5919.72</div>
<div class="t" style="left:805px;top:350px;color:#000;">5918.34</div>
<div style="left:587px;top:369px;width:262px;height:18px;background:#fff"></div>
<div style="left:588px;top:369px;width:94px;height:17px;background:#f0f0f0"></div>
<div style="left:684px;top:369px;width:74px;height:17px;background:#f0f0f0"></div>
<div style="left:760px;top:369px;width:88px;height:17px;background:#f0f0f0"></div>
<div class="t" style="left:591px;top:368px;color:#000;letter-spacing:0.049px;">Velocity [u/s]</div>
<div class="t" style="left:733px;top:368px;color:#000;letter-spacing:0.259px;">0.00</div>
<div class="t" style="left:823px;top:368px;color:#000;letter-spacing:0.335px;">0.11</div>
<div style="left:587px;top:387px;width:262px;height:18px;background:#fff"></div>
<div style="left:588px;top:387px;width:94px;height:17px;background:#f0f0f0"></div>
<div style="left:684px;top:387px;width:74px;height:17px;background:#f0f0f0"></div>
<div style="left:760px;top:387px;width:88px;height:17px;background:#f0f0f0"></div>
<div class="t" style="left:591px;top:386px;color:#000;letter-spacing:-0.019px;">Acceleration [u/s²]</div>
<div class="t" style="left:733px;top:386px;color:#000;letter-spacing:0.259px;">0.00</div>
<div class="t" style="left:822px;top:386px;color:#000;letter-spacing:0.259px;">0.00</div>
<div style="left:587px;top:405px;width:262px;height:18px;background:#fff"></div>
<div style="left:588px;top:405px;width:94px;height:17px;background:#f0f0f0"></div>
<div style="left:684px;top:405px;width:74px;height:17px;background:#f0f0f0"></div>
<div style="left:760px;top:405px;width:88px;height:17px;background:#f0f0f0"></div>
<div class="t" style="left:591px;top:404px;color:#000;letter-spacing:-0.072px;">Torque [Nm]</div>
<div class="t" style="left:733px;top:404px;color:#000;letter-spacing:0.259px;">0.00</div>
<div class="t" style="left:822px;top:404px;color:#000;letter-spacing:0.259px;">0.00</div>
<div style="left:849px;top:333px;width:4px;height:92px;background:#ebebeb"></div>
<div style="left:588px;top:434px;width:265px;height:31px;background:#d3d3d3;border:1px solid #a5a5a5;box-sizing:border-box"></div>
<div class="t" style="left:862px;top:331px;color:#000;letter-spacing:0.325px;">Status:</div>
<div style="left:943px;top:331px;width:297px;height:21px;background:#f0f0f0;border:1px solid #c9c9c9;box-shadow:inset 0 0 0 1px #fff;box-sizing:border-box"></div>
<div class="t" style="left:946px;top:331px;color:#6d6d6d;letter-spacing:-0.237px;">SMC_AXIS_STATE.errorstop</div>
<div class="t" style="left:862px;top:357px;color:#000;letter-spacing:0.194px;">Communication:</div>
<div style="left:943px;top:357px;width:297px;height:21px;background:#f0f0f0;border:1px solid #c9c9c9;box-shadow:inset 0 0 0 1px #fff;box-sizing:border-box"></div>
<div class="t" style="left:946px;top:357px;color:#6d6d6d;letter-spacing:0.039px;">operational (100)</div>
<div style="left:860px;top:390px;width:380px;height:173px;border:1px solid #dcdcdc;box-sizing:border-box"></div>
<div style="left:866px;top:390px;width:34px;height:1px;background:#fff"></div>
<div class="t" style="left:868px;top:380px;color:#000;letter-spacing:0.109px;">Errors</div>
<div class="t" style="left:868px;top:398px;color:#000;letter-spacing:0.186px;">Axis Error:</div>
<div style="left:866px;top:417px;width:368px;height:21px;background:#f0f0f0;border:1px solid #c9c9c9;box-shadow:inset 0 0 0 1px #fff;box-sizing:border-box"></div>
<div class="t" style="left:869px;top:417px;color:#6d6d6d;letter-spacing:0.172px;">0 [16#00000000]</div>
<div class="t" style="left:868px;top:437px;color:#000;letter-spacing:0.097px;">FB Error:</div>
<div style="left:866px;top:456px;width:368px;height:21px;background:#f0f0f0;border:1px solid #c9c9c9;box-shadow:inset 0 0 0 1px #fff;box-sizing:border-box"></div>
<div class="t" style="left:869px;top:456px;color:#6d6d6d;letter-spacing:-0.706px;">SMC_ERROR.SMC_DI_GENERAL_COMMUNICATION_ERROR</div>
<div class="t" style="left:868px;top:477px;color:#000;letter-spacing:0.288px;">uiDriveInterfaceError:</div>
<div style="left:866px;top:496px;width:368px;height:21px;background:#f0f0f0;border:1px solid #c9c9c9;box-shadow:inset 0 0 0 1px #fff;box-sizing:border-box"></div>
<div class="t" style="left:869px;top:496px;color:#6d6d6d;">0</div>
<div class="t" style="left:868px;top:516px;color:#000;letter-spacing:0.332px;">strDriveInterfaceError:</div>
<div style="left:866px;top:535px;width:368px;height:21px;background:#f0f0f0;border:1px solid #c9c9c9;box-shadow:inset 0 0 0 1px #fff;box-sizing:border-box"></div>
</body></html>
